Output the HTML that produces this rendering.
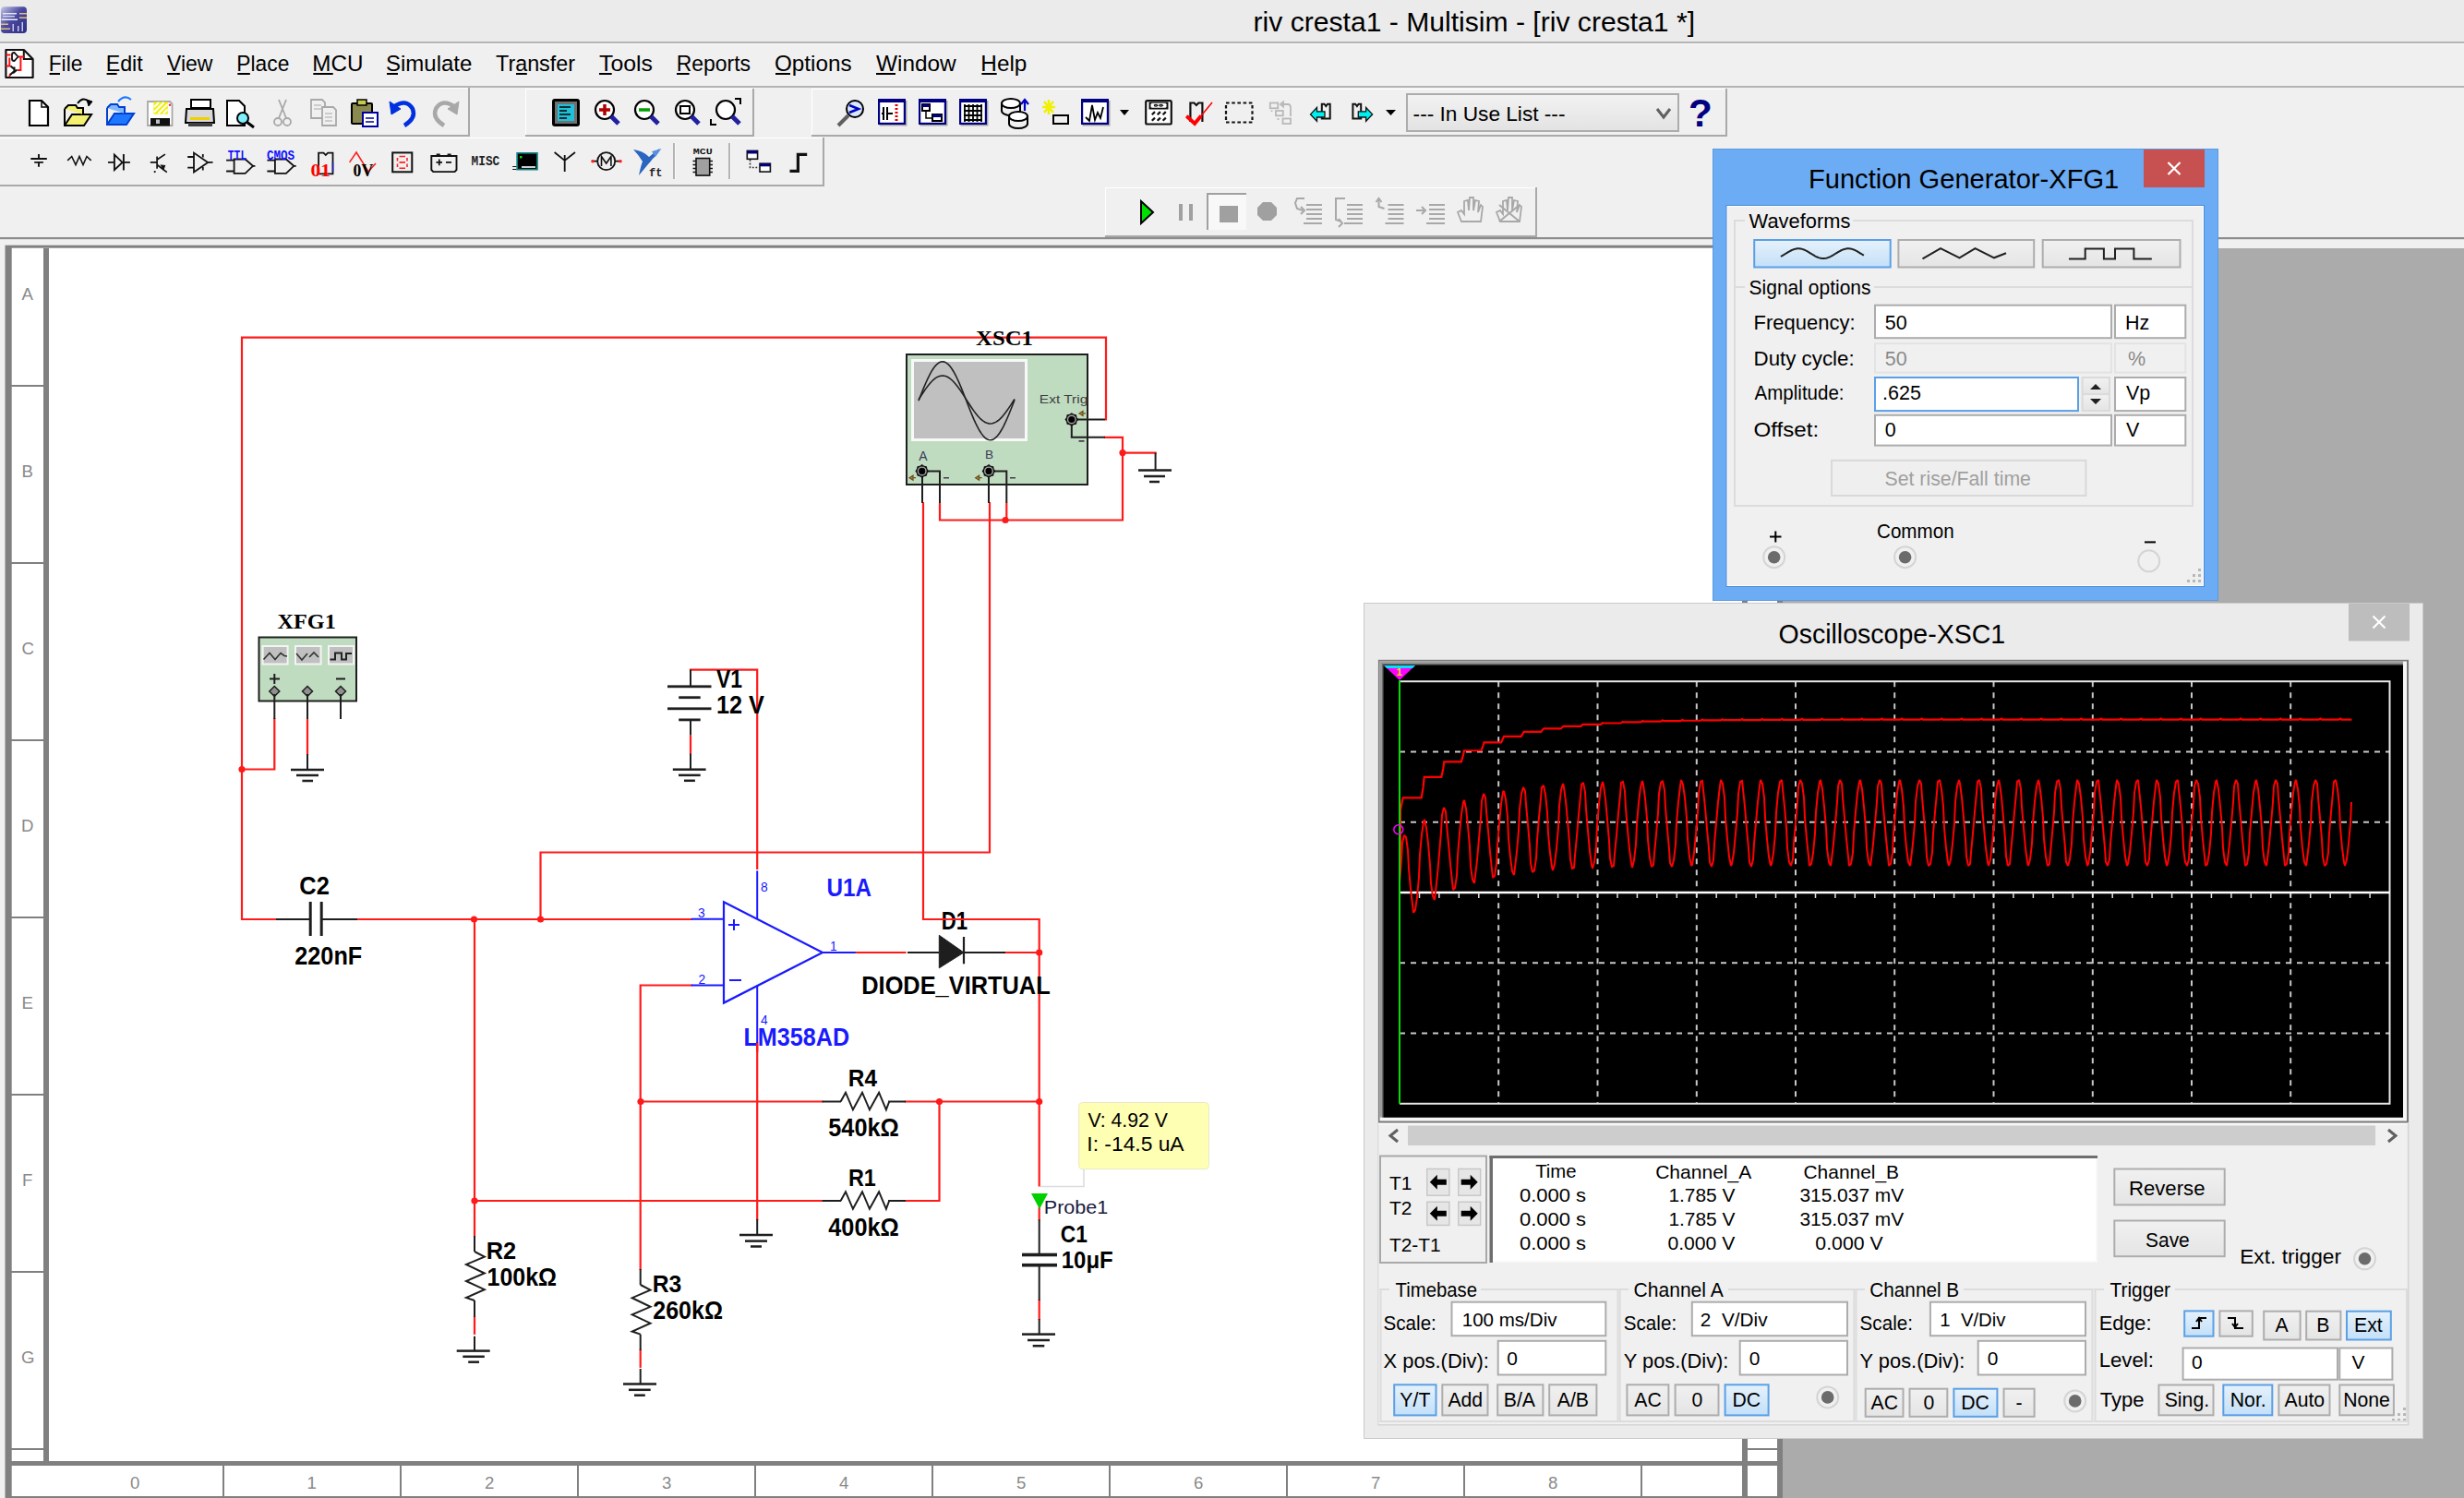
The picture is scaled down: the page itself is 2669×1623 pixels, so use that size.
<!DOCTYPE html>
<html><head><meta charset="utf-8"><title>Multisim</title>
<style>html,body{margin:0;padding:0;background:#f0f0f0;overflow:hidden;}svg{display:block;}text{white-space:pre;}</style>
</head><body>
<svg width="2669" height="1623" viewBox="0 0 2669 1623" font-family="'Liberation Sans', sans-serif">
<defs><linearGradient id="gbtn" x1="0" y1="0" x2="0" y2="1"><stop offset="0" stop-color="#f0f0f0"/><stop offset="1" stop-color="#e5e5e5"/></linearGradient>
<linearGradient id="gsel" x1="0" y1="0" x2="0" y2="1"><stop offset="0" stop-color="#e5f1fb"/><stop offset="1" stop-color="#c4e0f8"/></linearGradient></defs>
<rect x="0" y="0" width="2669" height="1623" fill="#f0f0f0" />
<rect x="0" y="0" width="2669" height="45" fill="#ebebeb" />
<rect x="0" y="45" width="2669" height="2" fill="#b4b4b4" />
<rect x="0" y="47" width="2669" height="1" fill="#fafafa" />
<linearGradient id="gicon" x1="0" y1="0" x2="1" y2="1"><stop offset="0" stop-color="#c8c8e8"/><stop offset="0.45" stop-color="#4a4aa0"/><stop offset="1" stop-color="#2c2c80"/></linearGradient>
<rect x="1" y="7.2" width="28" height="28.8" fill="url(#gicon)" rx="4"/>
<rect x="3" y="14" width="15" height="1.5" fill="#e8e8f8" />
<rect x="3" y="17" width="13" height="1.5" fill="#d0d0f0" />
<rect x="1.5" y="20.5" width="17.5" height="1.5" fill="#f0f0ff" />
<rect x="21" y="14" width="8" height="1.5" fill="#e0c080" />
<rect x="21" y="18.5" width="8" height="1.5" fill="#e0c080" />
<rect x="1" y="25.5" width="8" height="1.5" fill="#e0c080" />
<rect x="1" y="30.5" width="10" height="1.5" fill="#e0c080" />
<rect x="13.5" y="26" width="1.5" height="8" fill="#c8c8f0" />
<rect x="19" y="28" width="1.5" height="6" fill="#c8c8f0" />
<rect x="23.5" y="24" width="1.5" height="10" fill="#c8c8f0" />
<text x="1357.56" y="33.80" font-family="'Liberation Sans'" font-size="29.07" font-weight="normal" fill="#000" textLength="478.49" lengthAdjust="spacingAndGlyphs" >riv cresta1 - Multisim - [riv cresta1 *]</text>
<rect x="0" y="48" width="2669" height="45" fill="#f0f0f0" />
<rect x="0" y="93" width="2669" height="2" fill="#b4b4b4" />
<path d="M6.4,54 L25.8,54 L35.6,64 L35.6,84 L6.4,84 Z" stroke="#111" stroke-width="2.2" fill="#fff" stroke-linejoin="round"/>
<path d="M25.8,54 L25.8,64 L35.6,64" stroke="#111" stroke-width="2" fill="none" />
<path d="M6.5,59.6 L11.5,59.6 M10.3,62.5 L10.3,71.8 M6.5,71.5 L11.5,71.5 M22.4,61.5 L22.4,76 L19,76 M20,61.5 L25.8,61.5" stroke="#ff1010" stroke-width="2" fill="none" />
<path d="M10,83 L11.5,80" stroke="#ff1010" stroke-width="2" fill="none" />
<path d="M13,59 Q13,57 15.5,57 L19.5,61.5 L15.5,66 Q13,66 13,64 Z" stroke="#111" stroke-width="1.8" fill="none" />
<path d="M11.5,71.5 L15.5,75 M15.5,72.5 L15.5,78 L18.5,75.5 M15.5,77 L11,81" stroke="#111" stroke-width="2" fill="none" />
<text x="52.65" y="76.50" font-family="'Liberation Sans'" font-size="24.13" font-weight="normal" fill="#000" textLength="36.73" lengthAdjust="spacingAndGlyphs" >File</text>
<rect x="53.6" y="79" width="11.4" height="2" fill="#000" />
<text x="114.64" y="76.50" font-family="'Liberation Sans'" font-size="24.13" font-weight="normal" fill="#000" textLength="40.07" lengthAdjust="spacingAndGlyphs" >Edit</text>
<rect x="115.6" y="79" width="11" height="2" fill="#000" />
<text x="181.00" y="76.50" font-family="'Liberation Sans'" font-size="24.13" font-weight="normal" fill="#000" textLength="49.44" lengthAdjust="spacingAndGlyphs" >View</text>
<rect x="181" y="79" width="13.8" height="2" fill="#000" />
<text x="256.35" y="76.50" font-family="'Liberation Sans'" font-size="24.13" font-weight="normal" fill="#000" textLength="57.03" lengthAdjust="spacingAndGlyphs" >Place</text>
<rect x="257.3" y="79" width="13.5" height="2" fill="#000" />
<text x="338.30" y="76.50" font-family="'Liberation Sans'" font-size="24.13" font-weight="normal" fill="#000" textLength="55.12" lengthAdjust="spacingAndGlyphs" >MCU</text>
<rect x="339.3" y="79" width="21.4" height="2" fill="#000" />
<text x="418.00" y="76.50" font-family="'Liberation Sans'" font-size="24.13" font-weight="normal" fill="#000" textLength="93.40" lengthAdjust="spacingAndGlyphs" >Simulate</text>
<rect x="419" y="79" width="12" height="2" fill="#000" />
<text x="537.00" y="76.50" font-family="'Liberation Sans'" font-size="24.13" font-weight="normal" fill="#000" textLength="86.03" lengthAdjust="spacingAndGlyphs" >Transfer</text>
<rect x="559" y="79" width="11.8" height="2" fill="#000" />
<text x="649.00" y="76.50" font-family="'Liberation Sans'" font-size="24.13" font-weight="normal" fill="#000" textLength="58.06" lengthAdjust="spacingAndGlyphs" >Tools</text>
<rect x="649" y="79" width="13.7" height="2" fill="#000" />
<text x="732.65" y="76.50" font-family="'Liberation Sans'" font-size="24.13" font-weight="normal" fill="#000" textLength="80.40" lengthAdjust="spacingAndGlyphs" >Reports</text>
<rect x="733" y="79" width="13.6" height="2" fill="#000" />
<text x="838.99" y="76.50" font-family="'Liberation Sans'" font-size="24.13" font-weight="normal" fill="#000" textLength="83.66" lengthAdjust="spacingAndGlyphs" >Options</text>
<rect x="840" y="79" width="16" height="2" fill="#000" />
<text x="949.00" y="76.50" font-family="'Liberation Sans'" font-size="24.13" font-weight="normal" fill="#000" textLength="86.70" lengthAdjust="spacingAndGlyphs" >Window</text>
<rect x="949" y="79" width="21" height="2" fill="#000" />
<text x="1062.39" y="76.50" font-family="'Liberation Sans'" font-size="24.13" font-weight="normal" fill="#000" textLength="50.02" lengthAdjust="spacingAndGlyphs" >Help</text>
<rect x="1063.4" y="79" width="16.3" height="2" fill="#000" />
<rect x="-2" y="95" width="511" height="1" fill="#ffffff" />
<rect x="-2" y="95" width="1" height="53" fill="#ffffff" />
<rect x="-2" y="146" width="511" height="2" fill="#a9a9a9" />
<rect x="507" y="95" width="2" height="53" fill="#a9a9a9" />
<rect x="569" y="96" width="248" height="1" fill="#ffffff" />
<rect x="569" y="96" width="1" height="52" fill="#ffffff" />
<rect x="569" y="146" width="248" height="2" fill="#a9a9a9" />
<rect x="815" y="96" width="2" height="52" fill="#a9a9a9" />
<rect x="879" y="96" width="992" height="1" fill="#ffffff" />
<rect x="879" y="96" width="1" height="52" fill="#ffffff" />
<rect x="879" y="146" width="992" height="2" fill="#a9a9a9" />
<rect x="1869" y="96" width="2" height="52" fill="#a9a9a9" />
<rect x="-2" y="149" width="895" height="1" fill="#ffffff" />
<rect x="-2" y="149" width="1" height="53" fill="#ffffff" />
<rect x="-2" y="200" width="895" height="2" fill="#a9a9a9" />
<rect x="891" y="149" width="2" height="53" fill="#a9a9a9" />
<rect x="1197" y="203" width="468" height="1" fill="#ffffff" />
<rect x="1197" y="203" width="1" height="54" fill="#ffffff" />
<rect x="1197" y="255" width="468" height="2" fill="#a9a9a9" />
<rect x="1663" y="203" width="2" height="54" fill="#a9a9a9" />
<rect x="0" y="257" width="2669" height="2" fill="#8c8c8c" />
<rect x="0" y="259" width="2669" height="1" fill="#dcdcdc" />
<path d="M32,109 L45,109 L52,116 L52,136 L32,136 Z" stroke="#000" stroke-width="2.2" fill="#fff" />
<path d="M45,109 L45,116 L52,116" stroke="#000" stroke-width="1.5" fill="none" />
<path d="M70,118 L70,136 L91,136 L99,124 L78,124 L70,136" stroke="#000" stroke-width="2" fill="#f4f070" />
<path d="M70,118 L74,114 L82,114 L84,117 L90,117 L90,124" stroke="#000" stroke-width="2" fill="#f4f070" />
<path d="M84,112 Q90,104 96,110" stroke="#000" stroke-width="2" fill="none" />
<path d="M94,108 L100,110 L96,115 Z" stroke="#000" stroke-width="1" fill="#000" />
<path d="M116,117 L116,135 L137,135 L145,123 L124,123 L116,135" stroke="#0040d0" stroke-width="2" fill="#1e78ff" />
<path d="M116,117 L120,113 L127,113 L129,116 L135,116 L135,123" stroke="#0040d0" stroke-width="2" fill="#80b8ff" />
<path d="M128,110 Q135,102 142,108" stroke="#1e78ff" stroke-width="2" fill="none" />
<path d="M160,110 L184,110 L186.5,112.5 L186.5,136 L160,136 Z" stroke="#a8a8a8" stroke-width="1.8" fill="#ffffff" />
<rect x="166.4" y="110.4" width="15.4" height="13.2" fill="#f0f000" />
<path d="M167,116 L172,111 M167,121.5 L177.5,111 M171.5,123 L181.5,113 M177,123 L181.5,118.5" stroke="#ffffff" stroke-width="2.2" fill="none" />
<rect x="163" y="128" width="21" height="8.5" fill="#111" />
<rect x="169" y="129.5" width="4" height="4.5" fill="#c0c0c0" />
<circle cx="184" cy="113.7" r="1.2" fill="#ff2020" stroke="none" stroke-width="1"/>
<rect x="207" y="108" width="21" height="9" fill="#fff" stroke="#000" stroke-width="2"/>
<path d="M202,118 L231,118 L232,133 L201,133 Z" stroke="#000" stroke-width="2" fill="#d8d8d8" />
<rect x="206" y="127" width="21" height="3" fill="#f0d000" />
<rect x="204" y="133" width="26" height="4" fill="#404040" />
<path d="M246,109 L259,109 L265,115 L265,136 L246,136 Z" stroke="#000" stroke-width="2" fill="#fff" />
<circle cx="263" cy="128" r="6" fill="#80f0ff" stroke="#000" stroke-width="2"/>
<path d="M267,132 L275,138" stroke="#000" stroke-width="3" fill="none" />
<circle cx="301" cy="132" r="4" fill="none" stroke="#a8a8a8" stroke-width="1.8"/>
<circle cx="311" cy="132" r="4" fill="none" stroke="#a8a8a8" stroke-width="1.8"/>
<path d="M302,128 L310,108 M310,128 L302,108" stroke="#a8a8a8" stroke-width="1.8" fill="none" />
<path d="M337,108 L349,108 L352,111 L352,128 L337,128 Z" stroke="#a8a8a8" stroke-width="1.8" fill="#f0f0f0" />
<path d="M349,116 L361,116 L364,119 L364,136 L349,136 Z" stroke="#a8a8a8" stroke-width="1.8" fill="#f0f0f0" />
<path d="M340,114 L348,114 M340,118 L348,118 M352,123 L360,123 M352,127 L360,127 M352,131 L360,131" stroke="#a8a8a8" stroke-width="1.2" fill="none" />
<rect x="380" y="111" width="24" height="24" fill="#000" rx="2"/>
<rect x="382" y="113" width="20" height="20" fill="#8a8a50" />
<rect x="387" y="108" width="10" height="6" fill="#c8c850" stroke="#000" stroke-width="1.5"/>
<rect x="393" y="122" width="16" height="15" fill="#fff" stroke="#0000a0" stroke-width="2"/>
<path d="M396,128 L405,128 M396,132 L405,132" stroke="#0000a0" stroke-width="1.5" fill="none" />
<path d="M426,116 Q440,106 447,118 Q451,128 438,136" stroke="#0030e0" stroke-width="4.5" fill="none" />
<path d="M422,110 L424,124 L434,118 Z" stroke="#0030e0" stroke-width="1" fill="#0030e0" />
<path d="M493,116 Q479,106 472,118 Q468,128 481,136" stroke="#a8a8a8" stroke-width="4.5" fill="none" />
<path d="M497,110 L495,124 L485,118 Z" stroke="#a8a8a8" stroke-width="1" fill="#a8a8a8" />
<rect x="598" y="107" width="30" height="30" fill="#000" rx="3"/>
<rect x="601" y="110" width="24" height="24" fill="#707070" />
<rect x="604" y="113" width="18" height="18" fill="#20c0d8" />
<path d="M606,116 L618,116 M606,120 L614,120 M606,124 L618,124 M606,128 L614,128" stroke="#000" stroke-width="1.5" fill="none" />
<circle cx="655" cy="119" r="10" fill="#fff" stroke="#000" stroke-width="2.2"/>
<path d="M662,126 L670,134" stroke="#2020a0" stroke-width="5" fill="none" />
<path d="M649,119 L661,119 M655,113 L655,125" stroke="#b00000" stroke-width="3.5" fill="none" />
<circle cx="698" cy="119" r="10" fill="#fff" stroke="#000" stroke-width="2.2"/>
<path d="M705,126 L713,134" stroke="#2020a0" stroke-width="5" fill="none" />
<path d="M692,119 L704,119" stroke="#00a000" stroke-width="3.5" fill="none" />
<circle cx="742" cy="119" r="10" fill="#fff" stroke="#000" stroke-width="2.2"/>
<path d="M749,126 L757,134" stroke="#2020a0" stroke-width="5" fill="none" />
<rect x="737" y="115" width="10" height="8" fill="none" stroke="#000" stroke-width="2"/>
<circle cx="786" cy="119" r="10" fill="#fff" stroke="#000" stroke-width="2.2"/>
<path d="M793,126 L801,134" stroke="#2020a0" stroke-width="5" fill="none" />
<path d="M796,107 L802,107 L802,113" stroke="#000" stroke-width="2" fill="none" />
<path d="M770,129 L770,135 L776,135" stroke="#000" stroke-width="2" fill="none" />
<circle cx="926" cy="118" r="9" fill="#d8e8ff" stroke="#000" stroke-width="2"/>
<path d="M920,114 L930,118 L920,122" stroke="#0000c0" stroke-width="2.5" fill="none" />
<path d="M919,125 L908,136" stroke="#606060" stroke-width="4" fill="none" />
<rect x="952.5" y="109" width="30" height="27.5" fill="#a8a8a8" />
<rect x="951" y="107" width="30" height="28" fill="#000080" />
<rect x="953.2" y="111" width="25.6" height="21.8" fill="#fff" />
<path d="M957,116 L957,130 M961,116 L961,130 M955,123 L957,123 M961,123 L967,123" stroke="#000" stroke-width="2" fill="none" />
<path d="M971,113 L971,132" stroke="#e00000" stroke-width="3" fill="none" stroke-dasharray="2,2"/>
<rect x="996.5" y="109" width="30" height="27.5" fill="#a8a8a8" />
<rect x="995" y="107" width="30" height="28" fill="#000080" />
<rect x="997.2" y="111" width="25.6" height="21.8" fill="#fff" />
<rect x="999" y="113" width="8" height="7" fill="none" stroke="#000" stroke-width="2"/>
<rect x="999" y="113" width="8" height="3" fill="#000080" />
<rect x="1010" y="124" width="10" height="7" fill="none" stroke="#000" stroke-width="2"/>
<rect x="1010" y="124" width="10" height="3" fill="#000080" />
<path d="M1003,120 L1003,128 L1010,128" stroke="#000" stroke-width="1.5" fill="none" />
<rect x="1040.5" y="109" width="30" height="27.5" fill="#a8a8a8" />
<rect x="1039" y="107" width="30" height="28" fill="#000080" />
<rect x="1041.2" y="111" width="25.6" height="21.8" fill="#fff" />
<path d="M1045.0,113 L1045.0,132 M1049.5,113 L1049.5,132 M1054.0,113 L1054.0,132 M1058.5,113 L1058.5,132 M1063.0,113 L1063.0,132 M1044,115 L1064,115 M1044,120 L1064,120 M1044,125 L1064,125 M1044,130 L1064,130" stroke="#000" stroke-width="1.8" fill="none" />
<path d="M1085,112 L1085,120 A10,5 0 0 0 1105,120 L1105,112" stroke="#000" stroke-width="2" fill="#f0f0f0" />
<ellipse cx="1095" cy="112" rx="10" ry="5" fill="#fff" stroke="#000" stroke-width="2"/>
<path d="M1093,126 L1093,134 A10,5 0 0 0 1113,134 L1113,126" stroke="#000" stroke-width="2" fill="#f0f0f0" />
<ellipse cx="1103" cy="126" rx="10" ry="5" fill="#fff" stroke="#000" stroke-width="2"/>
<path d="M1110,120 L1110,110 M1106,113 L1110,108 L1114,113" stroke="#0000c0" stroke-width="2.2" fill="none" />
<path d="M1131,110 L1141,122 M1141,110 L1131,122 M1136,108 L1136,124 M1129,116 L1143,116" stroke="#f0f000" stroke-width="2.5" fill="none" />
<rect x="1141" y="125" width="16" height="9" fill="none" stroke="#000" stroke-width="2"/>
<rect x="1172.5" y="109" width="30" height="27.5" fill="#a8a8a8" />
<rect x="1171" y="107" width="30" height="28" fill="#000080" />
<rect x="1173.2" y="111" width="25.6" height="21.8" fill="#fff" />
<path d="M1176,127 L1180,131 L1183,114 L1186,130 L1189,122 L1192,128 L1195,116" stroke="#000" stroke-width="1.8" fill="none" />
<path d="M1213,119 L1223,119 L1218,125 Z" stroke="none" stroke-width="0" fill="#000" />
<rect x="1241.2" y="109.2" width="27.6" height="25.3" fill="#fff" stroke="#111" stroke-width="2.2" rx="1.5"/>
<rect x="1244.5" y="110.5" width="21" height="8" fill="#111" />
<rect x="1246.5" y="111.8" width="17" height="5" fill="#fff" rx="1.5"/>
<path d="M1250,114.3 Q1252,112.5 1254,114.3 Q1252,116 1250,114.3 M1255.5,114.3 Q1257.5,112.5 1259.5,114.3 Q1257.5,116 1255.5,114.3" stroke="#111" stroke-width="1.2" fill="none" />
<path d="M1247.8000000000002,124.3 L1251.0,121.10000000000001" stroke="#111" stroke-width="2.2" fill="none" />
<path d="M1253.7,124.3 L1256.8999999999999,121.10000000000001" stroke="#111" stroke-width="2.2" fill="none" />
<path d="M1259.6000000000001,124.3 L1262.8,121.10000000000001" stroke="#111" stroke-width="2.2" fill="none" />
<path d="M1247.8000000000002,130.79999999999998 L1251.0,127.6" stroke="#111" stroke-width="2.2" fill="none" />
<path d="M1253.7,130.79999999999998 L1256.8999999999999,127.6" stroke="#111" stroke-width="2.2" fill="none" />
<path d="M1259.6000000000001,130.79999999999998 L1262.8,127.6" stroke="#111" stroke-width="2.2" fill="none" />
<path d="M1289.4,132.1 L1289.4,111.5 L1293.5,111.5 L1295.9,114 L1298.3,111.5 L1302.4,111.5 L1302.4,132.1" stroke="#111" stroke-width="2.2" fill="none" />
<path d="M1285.3,125.7 L1294.1,133.9 L1313,111" stroke="#ff0000" stroke-width="1.6" fill="none" />
<path d="M1285.3,125.7 L1294.1,133.9 L1301,125.5" stroke="#ff0000" stroke-width="4" fill="none" />
<rect x="1328" y="111.5" width="28.5" height="21" fill="none" stroke="#111" stroke-width="2.2" stroke-dasharray="3.6,2.6"/>
<rect x="1375.8" y="111.5" width="8.5" height="5.8" fill="none" stroke="#b8b8b8" stroke-width="1.8"/>
<rect x="1382" y="120" width="7.8" height="5.3" fill="none" stroke="#b8b8b8" stroke-width="1.8"/>
<rect x="1389.5" y="128.5" width="8.5" height="5.5" fill="none" stroke="#b8b8b8" stroke-width="1.8"/>
<path d="M1377.5,119.5 L1377.5,121 M1384.5,128 L1384.5,130" stroke="#b8b8b8" stroke-width="1.8" fill="none" />
<path d="M1390,113 L1395,113 Q1398,113 1398,117 L1398,126 M1387,113 L1390,110.5 L1390,115.5 Z" stroke="#b8b8b8" stroke-width="1.8" fill="none" />
<path d="M1431.8,128.6 L1431.8,112.7 L1434.5,112.7 L1436.3,115 L1438,112.7 L1440.7,112.7 L1440.7,128.6 Z" stroke="#111" stroke-width="2" fill="none" />
<path d="M1419.5,123.9 L1426.5,116.5 L1426.5,120.8 L1435,120.8 L1435,127 L1426.5,127 L1426.5,131.3 Z" stroke="#111" stroke-width="1.3" fill="#00f0f0" />
<path d="M1465.4,128.6 L1465.4,112.7 L1468.1,112.7 L1469.9,115 L1471.6,112.7 L1474.2,112.7 L1474.2,128.6 Z" stroke="#111" stroke-width="2" fill="none" />
<path d="M1486.6,123.9 L1479.6,116.5 L1479.6,120.8 L1471.3,120.8 L1471.3,127 L1479.6,127 L1479.6,131.3 Z" stroke="#111" stroke-width="1.3" fill="#00f0f0" />
<path d="M1501,119 L1512,119 L1506.5,125 Z" stroke="none" stroke-width="0" fill="#000" />
<linearGradient id="gcombo" x1="0" y1="0" x2="0" y2="1"><stop offset="0" stop-color="#f2f2f2"/><stop offset="1" stop-color="#e3e3e3"/></linearGradient>
<rect x="1523" y="101" width="296" height="42" fill="#acacac" />
<rect x="1525" y="103" width="292" height="38" fill="url(#gcombo)" />
<text x="1530.61" y="130.90" font-family="'Liberation Sans'" font-size="22.97" font-weight="normal" fill="#000" textLength="164.82" lengthAdjust="spacingAndGlyphs" >--- In Use List ---</text>
<path d="M1795,118 L1802,127 L1809,118" stroke="#606060" stroke-width="3" fill="none" />
<text x="1829.00" y="137.00" font-family="'Liberation Sans'" font-size="42.15" font-weight="bold" fill="#000080" >?</text>
<path d="M33.3,172 L50.8,172 M37.2,175.9 L46.9,175.9 M42,167 L42,172 M42,176 L42,180.7" stroke="#111" stroke-width="1.9" fill="none" />
<path d="M73.2,173.9 L77.7,169.5 L82,178.6 L86,169.5 L90,178.6 L94,169.5 L98.7,173.9" stroke="#111" stroke-width="1.6" fill="none" />
<path d="M117,175.9 L123.9,175.9 M133.9,175.9 L140.9,175.9 M133.9,167 L133.9,184.5" stroke="#111" stroke-width="1.9" fill="none" />
<path d="M123.9,167.6 L132.6,175.9 L123.9,184.1 Z" stroke="#111" stroke-width="1.9" fill="none" />
<path d="M162.8,175.9 L170.1,175.9 M170.1,169.5 L170.1,182.7 M170.1,173 L178.9,167.1 M170.1,178.5 L180.8,186.6" stroke="#111" stroke-width="1.7" fill="none" />
<path d="M174.5,179 L178.5,179.5 L177,183.5 Z" stroke="#111" stroke-width="1.2" fill="#111" />
<circle cx="167.7" cy="186.1" r="1.1" fill="#111" stroke="none" stroke-width="1"/>
<path d="M210,165.6 L210,186.6 L225.2,175.9 Z" stroke="#111" stroke-width="1.8" fill="none" />
<path d="M203.2,170 L210,170 M203.2,181.7 L210,181.7 M225.2,175.9 L230.5,175.9 M219.8,167 L219.8,170.5 M219.8,181 L219.8,184.6" stroke="#111" stroke-width="1.8" fill="none" />
<path d="M253.6,172.5 L265.6,172.5 L274,179.8 L265.6,187.8 L253.6,187.8 Z" stroke="#111" stroke-width="1.8" fill="none" />
<path d="M245.1,173.6 L253.6,173.6 M245.1,185.5 L253.6,185.5 M274,179.8 L276.4,179.8" stroke="#111" stroke-width="1.8" fill="none" />
<text x="246.80" y="172.50" font-family="'Liberation Mono'" font-size="14.39" font-weight="bold" fill="#1010ff" textLength="20.39" lengthAdjust="spacingAndGlyphs" >TTL</text>
<path d="M297.9,172.5 L309.90000000000003,172.5 L318.3,179.8 L309.90000000000003,187.8 L297.9,187.8 Z" stroke="#111" stroke-width="1.8" fill="none" />
<path d="M289.4,173.6 L297.9,173.6 M289.4,185.5 L297.9,185.5 M318.3,179.8 L320.7,179.8" stroke="#111" stroke-width="1.8" fill="none" />
<text x="288.90" y="172.50" font-family="'Liberation Mono'" font-size="14.39" font-weight="bold" fill="#1010ff" textLength="30.27" lengthAdjust="spacingAndGlyphs" >CMOS</text>
<path d="M345.1,165.6 L350.5,165.6 L352.8,168 L355.2,165.6 L360.5,165.6 L360.5,188.4 L345.1,188.4 Z" stroke="#111" stroke-width="1.8" fill="none" />
<rect x="359.75" y="176" width="1.5" height="10" fill="#2020c0" />
<text x="336.60" y="190.60" font-family="'Liberation Serif'" font-size="19.85" font-weight="bold" fill="#ff0000" textLength="21.39" lengthAdjust="spacingAndGlyphs" >01</text>
<path d="M378.6,175.9 L386,165 L399,186 L407,177" stroke="#ff2020" stroke-width="1.6" fill="none" />
<text x="382.60" y="190.60" font-family="'Liberation Serif'" font-size="19.85" font-weight="bold" fill="#000" textLength="21.59" lengthAdjust="spacingAndGlyphs" >0V</text>
<rect x="425.2" y="165.4" width="21.1" height="20.9" fill="none" stroke="#111" stroke-width="2"/>
<path d="M432.5,169.5 L439,169.5 M432.5,175.9 L439,175.9 M432.5,182.2 L439,182.2 M430.5,171 L430.5,174.5 M441,171 L441,174.5 M430.5,177.5 L430.5,181 M441,177.5 L441,181" stroke="#ff2020" stroke-width="1.6" fill="none" />
<path d="M467.3,169 L494.5,169 L494.5,184 L492.5,186.1 L469.3,186.1 L467.3,184 Z" stroke="#111" stroke-width="1.9" fill="none" />
<rect x="472.7" y="166.5" width="4" height="2.5" fill="#111" />
<rect x="484.6" y="166.5" width="4" height="2.5" fill="#111" />
<path d="M472.5,175.9 L479,175.9 M475.8,172.6 L475.8,179.2 M483,175.9 L489,175.9" stroke="#111" stroke-width="1.7" fill="none" />
<text x="510.60" y="178.80" font-family="'Liberation Mono'" font-size="14.85" font-weight="bold" fill="#222" textLength="30.71" lengthAdjust="spacingAndGlyphs" >MISC</text>
<rect x="559.3" y="165" width="23.5" height="19.5" fill="#108080" />
<rect x="561" y="166.7" width="20.1" height="16.1" fill="#000" />
<rect x="563" y="169" width="2.5" height="2.5" fill="#00e000" />
<rect x="565" y="180" width="15" height="2" fill="#d0d0d0" />
<path d="M555.2,180.5 L559.3,180.5 M555.2,183.5 L559.3,183.5" stroke="#111" stroke-width="1.2" fill="none" />
<path d="M600.6,165 L611.7,173.9 L623,165 M611.7,168 L611.7,186" stroke="#111" stroke-width="1.8" fill="none" />
<circle cx="656.7" cy="174.7" r="9.5" fill="none" stroke="#111" stroke-width="1.8"/>
<path d="M651.5,180 L651.5,169.5 L656.7,177 L661.9,169.5 L661.9,180" stroke="#111" stroke-width="1.6" fill="none" />
<path d="M641.2,174.7 L647.2,174.7 M666.2,174.7 L672.9,174.7" stroke="#111" stroke-width="1.8" fill="none" />
<circle cx="642" cy="174.7" r="1.8" fill="#ff2020" stroke="none" stroke-width="1"/>
<circle cx="672" cy="174.7" r="1.8" fill="#ff2020" stroke="none" stroke-width="1"/>
<path d="M686,162 Q696,163 703,170 L714,161 Q712,168 707,172 Q704,176 702,178 Q697,184 692,190 Q694,180 696,175 Q692,168 686,162 Z" stroke="none" stroke-width="0" fill="#2a66c0" />
<path d="M706,164 L716.5,161 L710,170 Z" stroke="none" stroke-width="0" fill="#5a90e0" />
<text x="703.00" y="191.00" font-family="'Liberation Mono'" font-size="12.88" font-weight="bold" fill="#202020" textLength="14.37" lengthAdjust="spacingAndGlyphs" >ft</text>
<rect x="729" y="155" width="2" height="39" fill="#b4b4b4" />
<rect x="731" y="155" width="1" height="39" fill="#fafafa" />
<text x="750.80" y="167.00" font-family="'Liberation Mono'" font-size="9.09" font-weight="bold" fill="#111" textLength="20.87" lengthAdjust="spacingAndGlyphs" >MCU</text>
<rect x="754" y="171.5" width="14.7" height="18.6" fill="#a0a0a0" stroke="#111" stroke-width="1.6"/>
<path d="M750.5,174.5 L754,174.5 M750.5,178.5 L754,178.5 M750.5,182.5 L754,182.5 M750.5,186.5 L754,186.5 M768.7,174.5 L772,174.5 M768.7,178.5 L772,178.5 M768.7,182.5 L772,182.5 M768.7,186.5 L772,186.5" stroke="#111" stroke-width="1.6" fill="none" />
<rect x="789" y="155" width="2" height="39" fill="#b4b4b4" />
<rect x="791" y="155" width="1" height="39" fill="#fafafa" />
<rect x="809.3" y="163.4" width="11.3" height="8.9" fill="#fff" stroke="#111" stroke-width="1.6"/>
<rect x="809.3" y="163.4" width="11.3" height="3.1" fill="#000080" />
<rect x="823" y="177.2" width="11.4" height="8.9" fill="#fff" stroke="#111" stroke-width="1.6"/>
<rect x="823" y="177.2" width="11.4" height="3.1" fill="#000080" />
<path d="M812.5,173 L812.5,181.5 L823,181.5" stroke="#333" stroke-width="1.6" fill="none" stroke-dasharray="1.8,1.8"/>
<path d="M855.5,185.3 L864.4,185.3 L864.4,167.4 L874.2,167.4" stroke="#111" stroke-width="3.2" fill="none" />
<path d="M1236,218 L1249,230 L1236,242 Z" stroke="#000" stroke-width="2" fill="#00e000" />
<rect x="1277" y="221" width="4" height="18" fill="#a0a0a0" />
<rect x="1288" y="221" width="4" height="18" fill="#a0a0a0" />
<rect x="1307" y="209" width="43" height="40" fill="#f8f8f8" />
<rect x="1307" y="209" width="43" height="2" fill="#a0a0a0" />
<rect x="1307" y="209" width="2" height="40" fill="#a0a0a0" />
<rect x="1321" y="223" width="20" height="18" fill="#a0a0a0" />
<path d="M1368,219 L1377,219 L1383,225 L1383,233 L1377,239 L1368,239 L1362,233 L1362,225 Z" stroke="none" stroke-width="0" fill="#a0a0a0" />
<path d="M1415,222 L1432,222 M1415,227 L1432,227 M1415,232 L1432,232 M1415,237 L1432,237 M1412,242 L1432,242" stroke="#a8a8a8" stroke-width="1.8" fill="none" />
<path d="M1413,215 L1405,215 L1403,220 L1405,226 L1411,228" stroke="#a8a8a8" stroke-width="2" fill="none" />
<path d="M1409,224 L1413,228 L1409,232" stroke="#a8a8a8" stroke-width="2" fill="none" />
<path d="M1459,222 L1476,222 M1459,227 L1476,227 M1459,232 L1476,232 M1459,237 L1476,237 M1456,242 L1476,242" stroke="#a8a8a8" stroke-width="1.8" fill="none" />
<path d="M1457,215 L1447,215 L1447,238 L1453,240" stroke="#a8a8a8" stroke-width="2" fill="none" />
<path d="M1450,237 L1454,242 L1450,246" stroke="#a8a8a8" stroke-width="2" fill="none" />
<path d="M1503.5,222 L1520.5,222 M1503.5,227 L1520.5,227 M1503.5,232 L1520.5,232 M1503.5,237 L1520.5,237 M1500.5,242 L1520.5,242" stroke="#a8a8a8" stroke-width="1.8" fill="none" />
<path d="M1493.5,216 L1493.5,224 L1499.5,226" stroke="#a8a8a8" stroke-width="2" fill="none" />
<path d="M1490.5,219 L1493.5,215 L1496.5,219" stroke="#a8a8a8" stroke-width="2" fill="none" />
<path d="M1548,222 L1565,222 M1548,227 L1565,227 M1548,232 L1565,232 M1548,237 L1565,237 M1545,242 L1565,242" stroke="#a8a8a8" stroke-width="1.8" fill="none" />
<path d="M1534,228 L1544,228 M1540,224 L1544,228 L1540,232" stroke="#a8a8a8" stroke-width="2" fill="none" />
<path d="M1583,240 L1579,230 L1583,228 L1586,232 L1586,218 L1590,217 L1591,228 L1592,214 L1596,214 L1596,228 L1598,217 L1602,218 L1601,230 L1604,222 L1606,224 L1604,240 Z" stroke="#a8a8a8" stroke-width="1.8" fill="none" />
<path d="M1625,240 L1621,230 L1625,228 L1628,232 L1628,218 L1632,217 L1633,228 L1634,214 L1638,214 L1638,228 L1640,217 L1644,218 L1643,230 L1646,222 L1648,224 L1646,240 Z" stroke="#a8a8a8" stroke-width="1.8" fill="none" />
<path d="M1624,222 L1646,240 M1646,222 L1624,240" stroke="#a8a8a8" stroke-width="2" fill="none" />
<rect x="1931" y="269" width="738" height="1354" fill="#ababab" />
<rect x="5.5" y="265.7" width="1925.5" height="1357.3" fill="#808080" />
<rect x="12.7" y="268.7" width="1912.3" height="1352.3" fill="#ffffff" />
<rect x="47" y="269" width="6" height="1319" fill="#808080" />
<rect x="1887" y="269" width="6" height="1352" fill="#808080" />
<rect x="12" y="1583" width="1913" height="5" fill="#808080" />
<rect x="12" y="417" width="35" height="2" fill="#808080" />
<rect x="1893" y="417" width="32" height="2" fill="#808080" />
<rect x="12" y="609" width="35" height="2" fill="#808080" />
<rect x="1893" y="609" width="32" height="2" fill="#808080" />
<rect x="12" y="801" width="35" height="2" fill="#808080" />
<rect x="1893" y="801" width="32" height="2" fill="#808080" />
<rect x="12" y="993" width="35" height="2" fill="#808080" />
<rect x="1893" y="993" width="32" height="2" fill="#808080" />
<rect x="12" y="1185" width="35" height="2" fill="#808080" />
<rect x="1893" y="1185" width="32" height="2" fill="#808080" />
<rect x="12" y="1377" width="35" height="2" fill="#808080" />
<rect x="1893" y="1377" width="32" height="2" fill="#808080" />
<rect x="12" y="1569" width="35" height="2" fill="#808080" />
<rect x="1893" y="1569" width="32" height="2" fill="#808080" />
<rect x="241" y="1588" width="2" height="33" fill="#808080" />
<rect x="433" y="1588" width="2" height="33" fill="#808080" />
<rect x="625" y="1588" width="2" height="33" fill="#808080" />
<rect x="817" y="1588" width="2" height="33" fill="#808080" />
<rect x="1009" y="1588" width="2" height="33" fill="#808080" />
<rect x="1201" y="1588" width="2" height="33" fill="#808080" />
<rect x="1393" y="1588" width="2" height="33" fill="#808080" />
<rect x="1585" y="1588" width="2" height="33" fill="#808080" />
<rect x="1777" y="1588" width="2" height="33" fill="#808080" />
<text x="23.50" y="324.50" font-family="'Liberation Sans'" font-size="18.60" font-weight="normal" fill="#8a8a8a" >A</text>
<text x="23.50" y="516.50" font-family="'Liberation Sans'" font-size="18.60" font-weight="normal" fill="#8a8a8a" >B</text>
<text x="23.50" y="708.50" font-family="'Liberation Sans'" font-size="18.60" font-weight="normal" fill="#8a8a8a" >C</text>
<text x="23.00" y="900.50" font-family="'Liberation Sans'" font-size="18.60" font-weight="normal" fill="#8a8a8a" >D</text>
<text x="23.50" y="1092.50" font-family="'Liberation Sans'" font-size="18.60" font-weight="normal" fill="#8a8a8a" >E</text>
<text x="24.00" y="1284.50" font-family="'Liberation Sans'" font-size="18.60" font-weight="normal" fill="#8a8a8a" >F</text>
<text x="23.00" y="1476.50" font-family="'Liberation Sans'" font-size="18.60" font-weight="normal" fill="#8a8a8a" >G</text>
<text x="141.00" y="1612.70" font-family="'Liberation Sans'" font-size="18.60" font-weight="normal" fill="#8a8a8a" >0</text>
<text x="332.50" y="1612.70" font-family="'Liberation Sans'" font-size="18.60" font-weight="normal" fill="#8a8a8a" >1</text>
<text x="525.00" y="1612.70" font-family="'Liberation Sans'" font-size="18.60" font-weight="normal" fill="#8a8a8a" >2</text>
<text x="717.00" y="1612.70" font-family="'Liberation Sans'" font-size="18.60" font-weight="normal" fill="#8a8a8a" >3</text>
<text x="909.00" y="1612.70" font-family="'Liberation Sans'" font-size="18.60" font-weight="normal" fill="#8a8a8a" >4</text>
<text x="1101.00" y="1612.70" font-family="'Liberation Sans'" font-size="18.60" font-weight="normal" fill="#8a8a8a" >5</text>
<text x="1293.00" y="1612.70" font-family="'Liberation Sans'" font-size="18.60" font-weight="normal" fill="#8a8a8a" >6</text>
<text x="1485.00" y="1612.70" font-family="'Liberation Sans'" font-size="18.60" font-weight="normal" fill="#8a8a8a" >7</text>
<text x="1677.00" y="1612.70" font-family="'Liberation Sans'" font-size="18.60" font-weight="normal" fill="#8a8a8a" >8</text>
<path d="M1198,454.5 L1198,365.6 L262,365.6 L262,996 L299,996" stroke="#ff1a1a" stroke-width="2.2" fill="none" stroke-linejoin="miter" stroke-linecap="square"/>
<path d="M387,996 L748.8,996" stroke="#ff1a1a" stroke-width="2.2" fill="none" stroke-linejoin="miter" stroke-linecap="square"/>
<path d="M297.3,779 L297.3,833.5 L262,833.5" stroke="#ff1a1a" stroke-width="2.2" fill="none" stroke-linejoin="miter" stroke-linecap="square"/>
<path d="M333,780 L333,817" stroke="#ff1a1a" stroke-width="2.2" fill="none" stroke-linejoin="miter" stroke-linecap="square"/>
<path d="M1072,545 L1072,923.5 L585.5,923.5 L585.5,996" stroke="#ff1a1a" stroke-width="2.2" fill="none" stroke-linejoin="miter" stroke-linecap="square"/>
<path d="M1000,545 L1000,996 L1125.7,996 L1125.7,1284.5" stroke="#ff1a1a" stroke-width="2.2" fill="none" stroke-linejoin="miter" stroke-linecap="square"/>
<path d="M926.7,1032 L980.5,1032" stroke="#ff1a1a" stroke-width="2.2" fill="none" stroke-linejoin="miter" stroke-linecap="square"/>
<path d="M1089,1032 L1125.7,1032" stroke="#ff1a1a" stroke-width="2.2" fill="none" stroke-linejoin="miter" stroke-linecap="square"/>
<path d="M748,725.6 L820.2,725.6 L820.2,941" stroke="#ff1a1a" stroke-width="2.2" fill="none" stroke-linejoin="miter" stroke-linecap="square"/>
<path d="M748,797.5 L748,816.4" stroke="#ff1a1a" stroke-width="2.2" fill="none" stroke-linejoin="miter" stroke-linecap="square"/>
<path d="M820.2,1130 L820.2,1321" stroke="#ff1a1a" stroke-width="2.2" fill="none" stroke-linejoin="miter" stroke-linecap="square"/>
<path d="M748.8,1067.5 L693.7,1067.5 L693.7,1375" stroke="#ff1a1a" stroke-width="2.2" fill="none" stroke-linejoin="miter" stroke-linecap="square"/>
<path d="M694,1193.5 L890.6,1193.5" stroke="#ff1a1a" stroke-width="2.2" fill="none" stroke-linejoin="miter" stroke-linecap="square"/>
<path d="M981,1193.5 L1125.7,1193.5" stroke="#ff1a1a" stroke-width="2.2" fill="none" stroke-linejoin="miter" stroke-linecap="square"/>
<path d="M514,1301 L890.6,1301" stroke="#ff1a1a" stroke-width="2.2" fill="none" stroke-linejoin="miter" stroke-linecap="square"/>
<path d="M981,1301 L1017.5,1301 L1017.5,1193.5" stroke="#ff1a1a" stroke-width="2.2" fill="none" stroke-linejoin="miter" stroke-linecap="square"/>
<path d="M514,996 L514,1339" stroke="#ff1a1a" stroke-width="2.2" fill="none" stroke-linejoin="miter" stroke-linecap="square"/>
<path d="M514,1427 L514,1444.8" stroke="#ff1a1a" stroke-width="2.2" fill="none" stroke-linejoin="miter" stroke-linecap="square"/>
<path d="M693.7,1463 L693.7,1480.8" stroke="#ff1a1a" stroke-width="2.2" fill="none" stroke-linejoin="miter" stroke-linecap="square"/>
<path d="M1197,473.8 L1216,473.8 L1216,563.5 L1018,563.5 L1018,546" stroke="#ff1a1a" stroke-width="2.2" fill="none" stroke-linejoin="miter" stroke-linecap="square"/>
<path d="M1216,490.6 L1251.6,490.6" stroke="#ff1a1a" stroke-width="2.2" fill="none" stroke-linejoin="miter" stroke-linecap="square"/>
<path d="M1090.3,546 L1090.3,563.5" stroke="#ff1a1a" stroke-width="2.2" fill="none" stroke-linejoin="miter" stroke-linecap="square"/>
<path d="M1125.7,1309 L1125.7,1321.3" stroke="#ff1a1a" stroke-width="2.2" fill="none" stroke-linejoin="miter" stroke-linecap="square"/>
<path d="M1125.7,1409 L1125.7,1428.8" stroke="#ff1a1a" stroke-width="2.2" fill="none" stroke-linejoin="miter" stroke-linecap="square"/>
<circle cx="262" cy="833.5" r="3.6" fill="#ff1a1a" stroke="none" stroke-width="1"/>
<circle cx="513.5" cy="996" r="3.6" fill="#ff1a1a" stroke="none" stroke-width="1"/>
<circle cx="585.5" cy="996" r="3.6" fill="#ff1a1a" stroke="none" stroke-width="1"/>
<circle cx="1216" cy="490.6" r="3.6" fill="#ff1a1a" stroke="none" stroke-width="1"/>
<circle cx="1089" cy="563.5" r="3.6" fill="#ff1a1a" stroke="none" stroke-width="1"/>
<circle cx="694" cy="1193.5" r="3.6" fill="#ff1a1a" stroke="none" stroke-width="1"/>
<circle cx="1017.5" cy="1193.5" r="3.6" fill="#ff1a1a" stroke="none" stroke-width="1"/>
<circle cx="1125.7" cy="1193.5" r="3.6" fill="#ff1a1a" stroke="none" stroke-width="1"/>
<circle cx="1125.7" cy="1032" r="3.6" fill="#ff1a1a" stroke="none" stroke-width="1"/>
<circle cx="514" cy="1301" r="3.6" fill="#ff1a1a" stroke="none" stroke-width="1"/>
<rect x="981" y="383" width="198" height="143" fill="#1e1e1e" />
<rect x="983" y="385" width="194" height="139" fill="#c0dcc0" />
<rect x="987" y="389" width="126" height="89" fill="#f8f8f8" />
<rect x="990" y="392" width="120" height="83" fill="#c0c0c0" />
<path d="M995,434.3 L997,429.158 L999,424.091 L1001,419.174 L1003,414.479 L1005,410.076 L1007,406.028 L1009,402.396 L1011,399.233 L1013,396.586 L1015,394.492 L1017,392.983 L1019,392.082 L1021,391.801 L1023,392.144 L1025,393.107 L1027,394.675 L1029,396.826 L1031,399.527 L1033,402.739 L1035,406.415 L1037,410.501 L1039,414.937 L1041,419.657 L1043,424.592 L1045,429.67 L1047,434.815 L1049,439.954 L1051,445.009 L1053,449.907 L1055,454.575 L1057,458.946 L1059,462.954 L1061,466.542 L1063,469.655 L1065,472.249 L1067,474.286 L1069,475.734 L1071,476.574 L1073,476.793 L1075,476.387 L1077,475.363 L1079,473.735 L1081,471.528 L1083,468.774 L1085,465.513 L1087,461.794 L1089,457.67 L1091,453.203 L1093,448.458 L1095,443.506 L1097,438.418 L1099,433.269" stroke="#222" stroke-width="1.6" fill="none" />
<path d="M995,433 L997,429.854 L999,426.754 L1001,423.746 L1003,420.874 L1005,418.18 L1007,415.704 L1009,413.483 L1011,411.547 L1013,409.928 L1015,408.647 L1017,407.724 L1019,407.172 L1021,407 L1023,407.211 L1025,407.8 L1027,408.759 L1029,410.075 L1031,411.727 L1033,413.692 L1035,415.941 L1037,418.441 L1039,421.154 L1041,424.042 L1043,427.061 L1045,430.167 L1047,433.315 L1049,436.459 L1051,439.551 L1053,442.548 L1055,445.404 L1057,448.078 L1059,450.53 L1061,452.724 L1063,454.629 L1065,456.216 L1067,457.462 L1069,458.348 L1071,458.862 L1073,458.996 L1075,458.747 L1077,458.121 L1079,457.125 L1081,455.775 L1083,454.09 L1085,452.095 L1087,449.82 L1089,447.297 L1091,444.564 L1093,441.662 L1095,438.632 L1097,435.519 L1099,432.369" stroke="#222" stroke-width="1.6" fill="none" />
<text x="1057.00" y="374.40" font-family="'Liberation Serif'" font-size="22.60" font-weight="bold" fill="#000" textLength="61.92" lengthAdjust="spacingAndGlyphs" >XSC1</text>
<text x="1125.82" y="437.00" font-family="'Liberation Sans'" font-size="13.08" font-weight="normal" fill="#404040" textLength="52.50" lengthAdjust="spacingAndGlyphs" >Ext Trig</text>
<text x="995.30" y="498.60" font-family="'Liberation Sans'" font-size="13.95" font-weight="normal" fill="#3a3a5a" >A</text>
<text x="1067.00" y="496.60" font-family="'Liberation Sans'" font-size="13.66" font-weight="normal" fill="#3a3a5a" >B</text>
<path d="M999,510.6 L999,545" stroke="#1e1e1e" stroke-width="2" fill="none" />
<path d="M999,510.6 L1018,510.6 L1018,545" stroke="#1e1e1e" stroke-width="2" fill="none" />
<path d="M1071,510.6 L1071,545" stroke="#1e1e1e" stroke-width="2" fill="none" />
<path d="M1071,510.6 L1090.3,510.6 L1090.3,545" stroke="#1e1e1e" stroke-width="2" fill="none" />
<path d="M1160.8,454.5 L1197,454.5" stroke="#1e1e1e" stroke-width="2" fill="none" />
<path d="M1160.8,454.5 L1160.8,473.8 L1197,473.8" stroke="#1e1e1e" stroke-width="2" fill="none" />
<polygon points="1006.00,510.40 1004.43,512.77 1003.86,515.56 1001.07,516.13 998.70,517.70 996.33,516.13 993.54,515.56 992.97,512.77 991.40,510.40 992.97,508.03 993.54,505.24 996.33,504.67 998.70,503.10 1001.07,504.67 1003.86,505.24 1004.43,508.03" fill="#111"/>
<circle cx="998.7" cy="510.4" r="4.3" fill="none" stroke="#a0a0a0" stroke-width="1.4"/>
<circle cx="998.7" cy="510.4" r="3" fill="#000" stroke="none" stroke-width="1"/>
<polygon points="1078.30,510.40 1076.73,512.77 1076.16,515.56 1073.37,516.13 1071.00,517.70 1068.63,516.13 1065.84,515.56 1065.27,512.77 1063.70,510.40 1065.27,508.03 1065.84,505.24 1068.63,504.67 1071.00,503.10 1073.37,504.67 1076.16,505.24 1076.73,508.03" fill="#111"/>
<circle cx="1071" cy="510.4" r="4.3" fill="none" stroke="#a0a0a0" stroke-width="1.4"/>
<circle cx="1071" cy="510.4" r="3" fill="#000" stroke="none" stroke-width="1"/>
<polygon points="1168.10,454.50 1166.53,456.87 1165.96,459.66 1163.17,460.23 1160.80,461.80 1158.43,460.23 1155.64,459.66 1155.07,456.87 1153.50,454.50 1155.07,452.13 1155.64,449.34 1158.43,448.77 1160.80,447.20 1163.17,448.77 1165.96,449.34 1166.53,452.13" fill="#111"/>
<circle cx="1160.8" cy="454.5" r="4.3" fill="none" stroke="#a0a0a0" stroke-width="1.4"/>
<circle cx="1160.8" cy="454.5" r="3" fill="#000" stroke="none" stroke-width="1"/>
<path d="M1022,517.7 L1028,517.7 M1094,517.7 L1100,517.7 M1168.5,477.9 L1174.5,477.9" stroke="#4a3a50" stroke-width="1.6" fill="none" />
<path d="M985,517.7 L989,515.2 L989,520.2 Z M989,517.7 L992,517.7" stroke="#6a5020" stroke-width="1.2" fill="#c08020" />
<path d="M1056.6,517.7 L1060.6,515.2 L1060.6,520.2 Z M1060.6,517.7 L1063.6,517.7" stroke="#6a5020" stroke-width="1.2" fill="#c08020" />
<path d="M1169,447.9 L1173,445.4 L1173,450.4 Z M1173,447.9 L1176,447.9" stroke="#6a5020" stroke-width="1.2" fill="#c08020" />
<path d="M1251.6,490.6 L1251.6,509.5" stroke="#1e1e1e" stroke-width="2" fill="none" />
<rect x="1233" y="508.25" width="36" height="2.5" fill="#1e1e1e" />
<rect x="1239" y="514.75" width="23" height="2.5" fill="#1e1e1e" />
<rect x="1245" y="520.75" width="11" height="2.5" fill="#1e1e1e" />
<rect x="279.5" y="689.5" width="107.5" height="71" fill="#1e1e1e" />
<rect x="281.5" y="691.5" width="103.5" height="67" fill="#c0dcc0" />
<rect x="283.6" y="699" width="29" height="21.5" fill="#f4f4f4" />
<rect x="285.6" y="701" width="25" height="17.5" fill="#c0c0c0" />
<rect x="319" y="699" width="29.6" height="21.5" fill="#f4f4f4" />
<rect x="321" y="701" width="25.6" height="17.5" fill="#c0c0c0" />
<rect x="355" y="699" width="29" height="21.5" fill="#f4f4f4" />
<rect x="357" y="701" width="25" height="17.5" fill="#c0c0c0" />
<path d="M285.5,714.5 L292,707.5 L298,714.5 L304,707.5 L308,710.5 L311,711" stroke="#333" stroke-width="1.6" fill="none" />
<path d="M321,708 L327,715 L333,708" stroke="#333" stroke-width="1.6" fill="none" />
<path d="M335,712 L340,707 L345,712" stroke="#333" stroke-width="1.6" fill="none" />
<path d="M357.5,714.5 L363,714.5 L363,707.5 L370,707.5 L370,714.5 L375,714.5 L375,708 L381,708" stroke="#222" stroke-width="2" fill="none" />
<path d="M292,735.6 L303,735.6 M297.3,730 L297.3,741 M364,735.6 L374,735.6" stroke="#1e1e1e" stroke-width="2" fill="none" />
<path d="M297.3,743.5 L302.8,749 L297.3,754.5 L291.8,749 Z" stroke="#1e1e1e" stroke-width="1.5" fill="#909090" />
<path d="M333,743.5 L338.5,749 L333,754.5 L327.5,749 Z" stroke="#1e1e1e" stroke-width="1.5" fill="#909090" />
<path d="M369,743.5 L374.5,749 L369,754.5 L363.5,749 Z" stroke="#1e1e1e" stroke-width="1.5" fill="#909090" />
<text x="300.50" y="680.80" font-family="'Liberation Serif'" font-size="22.14" font-weight="bold" fill="#000" textLength="63.26" lengthAdjust="spacingAndGlyphs" >XFG1</text>
<path d="M297.3,752 L297.3,779" stroke="#1e1e1e" stroke-width="2" fill="none" />
<path d="M333,752 L333,779" stroke="#1e1e1e" stroke-width="2" fill="none" />
<path d="M369,752 L369,779" stroke="#1e1e1e" stroke-width="2" fill="none" />
<path d="M333,817 L333,834" stroke="#1e1e1e" stroke-width="2" fill="none" />
<rect x="315" y="832.75" width="36" height="2.5" fill="#1e1e1e" />
<rect x="321" y="838.75" width="24" height="2.5" fill="#1e1e1e" />
<rect x="327.4" y="844.75" width="11.6" height="2.5" fill="#1e1e1e" />
<path d="M299,996 L335,996" stroke="#1e1e1e" stroke-width="2" fill="none" />
<path d="M349,996 L387,996" stroke="#1e1e1e" stroke-width="2" fill="none" />
<rect x="334.7" y="977" width="3" height="37" fill="#1e1e1e" />
<rect x="346.7" y="977" width="3" height="37" fill="#1e1e1e" />
<text x="324.37" y="969.10" font-family="'Liberation Sans'" font-size="27.33" font-weight="bold" fill="#000" textLength="32.51" lengthAdjust="spacingAndGlyphs" >C2</text>
<text x="319.30" y="1044.80" font-family="'Liberation Sans'" font-size="27.91" font-weight="bold" fill="#000" textLength="72.93" lengthAdjust="spacingAndGlyphs" >220nF</text>
<path d="M748,725.6 L748,743.8" stroke="#1e1e1e" stroke-width="2" fill="none" />
<rect x="723" y="742.4" width="47.5" height="2.8" fill="#1e1e1e" />
<rect x="735.2" y="754.3" width="23.5" height="2.8" fill="#1e1e1e" />
<rect x="723" y="766.4" width="47.5" height="2.8" fill="#1e1e1e" />
<rect x="735.2" y="778.5" width="23.5" height="2.8" fill="#1e1e1e" />
<path d="M748,779.9 L748,796.6" stroke="#1e1e1e" stroke-width="2" fill="none" />
<path d="M748,816.4 L748,833.7" stroke="#1e1e1e" stroke-width="2" fill="none" />
<rect x="728.8" y="832.45" width="35.8" height="2.5" fill="#1e1e1e" />
<rect x="735" y="838.65" width="23.7" height="2.5" fill="#1e1e1e" />
<rect x="741" y="844.55" width="11.9" height="2.5" fill="#1e1e1e" />
<text x="776.00" y="744.60" font-family="'Liberation Sans'" font-size="26.89" font-weight="bold" fill="#000" textLength="28.05" lengthAdjust="spacingAndGlyphs" >V1</text>
<text x="775.97" y="772.60" font-family="'Liberation Sans'" font-size="27.33" font-weight="bold" fill="#000" textLength="52.00" lengthAdjust="spacingAndGlyphs" >12 V</text>
<path d="M784,977.2 L891,1032 L784,1086.6 Z" stroke="#1a1aff" stroke-width="2.2" fill="none" />
<path d="M748.8,995.8 L784,995.8" stroke="#1a1aff" stroke-width="2" fill="none" />
<path d="M748.8,1067.5 L784,1067.5" stroke="#1a1aff" stroke-width="2" fill="none" />
<path d="M891,1032 L926.7,1032" stroke="#1a1aff" stroke-width="2" fill="none" />
<path d="M820.2,943.4 L820.2,995" stroke="#1a1aff" stroke-width="2" fill="none" />
<path d="M820.2,1068 L820.2,1130" stroke="#1a1aff" stroke-width="2" fill="none" />
<path d="M789,1002 L801,1002 M795,996 L795,1008 M790,1062 L803,1062" stroke="#1a1aff" stroke-width="2" fill="none" />
<text x="756.00" y="994.00" font-family="'Liberation Sans'" font-size="13.81" font-weight="normal" fill="#1a1aff" >3</text>
<text x="756.50" y="1066.00" font-family="'Liberation Sans'" font-size="13.81" font-weight="normal" fill="#1a1aff" >2</text>
<text x="899.00" y="1030.00" font-family="'Liberation Sans'" font-size="13.81" font-weight="normal" fill="#1a1aff" >1</text>
<text x="824.00" y="966.00" font-family="'Liberation Sans'" font-size="13.81" font-weight="normal" fill="#1a1aff" >8</text>
<text x="824.00" y="1110.00" font-family="'Liberation Sans'" font-size="13.81" font-weight="normal" fill="#1a1aff" >4</text>
<text x="895.42" y="970.60" font-family="'Liberation Sans'" font-size="27.62" font-weight="bold" fill="#1a1aff" textLength="48.52" lengthAdjust="spacingAndGlyphs" >U1A</text>
<text x="805.46" y="1132.60" font-family="'Liberation Sans'" font-size="26.89" font-weight="bold" fill="#1a1aff" textLength="114.72" lengthAdjust="spacingAndGlyphs" >LM358AD</text>
<path d="M820.2,1130 L820.2,1140" stroke="#ff1a1a" stroke-width="2.2" fill="none" />
<path d="M983,1032 L1017,1032" stroke="#1e1e1e" stroke-width="2" fill="none" />
<path d="M1044,1032 L1089,1032" stroke="#1e1e1e" stroke-width="2" fill="none" />
<path d="M1017.3,1013.3 L1044,1032 L1017.3,1048.8 Z" stroke="#1e1e1e" stroke-width="1" fill="#1e1e1e" />
<rect x="1042.9" y="1015" width="2.2" height="29.3" fill="#1e1e1e" />
<text x="1019.70" y="1006.90" font-family="'Liberation Sans'" font-size="27.62" font-weight="bold" fill="#000" textLength="28.29" lengthAdjust="spacingAndGlyphs" >D1</text>
<text x="933.28" y="1076.70" font-family="'Liberation Sans'" font-size="27.62" font-weight="bold" fill="#000" textLength="204.39" lengthAdjust="spacingAndGlyphs" >DIODE_VIRTUAL</text>
<path d="M1000,996 L1125.7,996" stroke="#ff1a1a" stroke-width="2.2" fill="none" />
<path d="M890.6,1193.5 L911,1193.5" stroke="#1e1e1e" stroke-width="2" fill="none" />
<path d="M962,1193.5 L981,1193.5" stroke="#1e1e1e" stroke-width="2" fill="none" />
<path d="M910.6,1193.5 L916,1183.7 L923.9,1202.3 L934,1183.7 L941.9,1202.3 L952.1,1183.7 L959.9,1202.3 L963.2,1193.5" stroke="#1e1e1e" stroke-width="2" fill="none" />
<path d="M890.6,1301 L911,1301" stroke="#1e1e1e" stroke-width="2" fill="none" />
<path d="M962,1301 L981,1301" stroke="#1e1e1e" stroke-width="2" fill="none" />
<path d="M910.6,1301 L916,1291.2 L923.9,1309.8 L934,1291.2 L941.9,1309.8 L952.1,1291.2 L959.9,1309.8 L963.2,1301" stroke="#1e1e1e" stroke-width="2" fill="none" />
<text x="918.87" y="1176.50" font-family="'Liberation Sans'" font-size="26.16" font-weight="bold" fill="#000" textLength="31.21" lengthAdjust="spacingAndGlyphs" >R4</text>
<text x="897.30" y="1230.60" font-family="'Liberation Sans'" font-size="26.89" font-weight="bold" fill="#000" textLength="76.51" lengthAdjust="spacingAndGlyphs" >540kΩ</text>
<text x="918.91" y="1284.70" font-family="'Liberation Sans'" font-size="26.16" font-weight="bold" fill="#000" textLength="29.88" lengthAdjust="spacingAndGlyphs" >R1</text>
<text x="897.30" y="1338.70" font-family="'Liberation Sans'" font-size="26.89" font-weight="bold" fill="#000" textLength="76.51" lengthAdjust="spacingAndGlyphs" >400kΩ</text>
<path d="M820.2,1321 L820.2,1338" stroke="#1e1e1e" stroke-width="2" fill="none" />
<rect x="801" y="1336.75" width="36" height="2.5" fill="#1e1e1e" />
<rect x="807" y="1343.35" width="24" height="2.5" fill="#1e1e1e" />
<rect x="813" y="1349.25" width="12" height="2.5" fill="#1e1e1e" />
<path d="M514,1339 L514,1356" stroke="#1e1e1e" stroke-width="2" fill="none" />
<path d="M514,1356 L524.8,1361.61 L505,1370.03 L524.8,1379.54 L505,1387.96 L524.8,1397.18 L505,1405.99 L514,1409" stroke="#1e1e1e" stroke-width="2" fill="none" />
<path d="M514,1409 L514,1427" stroke="#1e1e1e" stroke-width="2" fill="none" />
<path d="M514,1447.8 L514,1463.6" stroke="#1e1e1e" stroke-width="2" fill="none" />
<rect x="494.7" y="1462.35" width="36" height="2.5" fill="#1e1e1e" />
<rect x="501.3" y="1468.55" width="23.5" height="2.5" fill="#1e1e1e" />
<rect x="507.2" y="1474.45" width="11.8" height="2.5" fill="#1e1e1e" />
<text x="526.73" y="1364.00" font-family="'Liberation Sans'" font-size="26.16" font-weight="bold" fill="#000" textLength="32.40" lengthAdjust="spacingAndGlyphs" >R2</text>
<text x="527.57" y="1392.70" font-family="'Liberation Sans'" font-size="26.89" font-weight="bold" fill="#000" textLength="75.54" lengthAdjust="spacingAndGlyphs" >100kΩ</text>
<path d="M693.7,1375 L693.7,1392" stroke="#1e1e1e" stroke-width="2" fill="none" />
<path d="M693.7,1392 L704.5,1397.67 L684.7,1406.19 L704.5,1415.81 L684.7,1424.32 L704.5,1433.64 L684.7,1442.56 L693.7,1445.6" stroke="#1e1e1e" stroke-width="2" fill="none" />
<path d="M693.7,1445.6 L693.7,1463" stroke="#1e1e1e" stroke-width="2" fill="none" />
<path d="M693.7,1483 L693.7,1499.5" stroke="#1e1e1e" stroke-width="2" fill="none" />
<rect x="675" y="1498.25" width="36" height="2.5" fill="#1e1e1e" />
<rect x="681" y="1504.55" width="23.7" height="2.5" fill="#1e1e1e" />
<rect x="687" y="1510.45" width="11.8" height="2.5" fill="#1e1e1e" />
<text x="706.66" y="1400.00" font-family="'Liberation Sans'" font-size="26.16" font-weight="bold" fill="#000" textLength="31.56" lengthAdjust="spacingAndGlyphs" >R3</text>
<text x="707.30" y="1428.70" font-family="'Liberation Sans'" font-size="26.89" font-weight="bold" fill="#000" textLength="75.71" lengthAdjust="spacingAndGlyphs" >260kΩ</text>
<path d="M1174,1267 L1174,1285.5 L1127,1285.5" stroke="#dcdcdc" stroke-width="1.5" fill="none" />
<rect x="1168.7" y="1194.5" width="140.7" height="72.2" fill="#ffffb4" rx="4" stroke="#e8e8c8" stroke-width="1"/>
<text x="1178.40" y="1220.70" font-family="'Liberation Sans'" font-size="21.51" font-weight="normal" fill="#000" textLength="86.45" lengthAdjust="spacingAndGlyphs" >V: 4.92 V</text>
<text x="1177.34" y="1246.80" font-family="'Liberation Sans'" font-size="21.51" font-weight="normal" fill="#000" textLength="105.26" lengthAdjust="spacingAndGlyphs" >I: -14.5 uA</text>
<path d="M1117,1293 L1135,1293 L1126,1310 Z" stroke="none" stroke-width="0" fill="#00d000" />
<text x="1130.84" y="1314.60" font-family="'Liberation Sans'" font-size="20.35" font-weight="normal" fill="#1a1a40" textLength="69.48" lengthAdjust="spacingAndGlyphs" >Probe1</text>
<path d="M1125.7,1321.3 L1125.7,1359.5" stroke="#1e1e1e" stroke-width="2" fill="none" />
<rect x="1107" y="1357.7" width="38" height="3.6" fill="#1e1e1e" />
<rect x="1107" y="1368.9" width="38" height="3.6" fill="#1e1e1e" />
<path d="M1125.7,1370.7 L1125.7,1409" stroke="#1e1e1e" stroke-width="2" fill="none" />
<path d="M1125.7,1429 L1125.7,1445.6" stroke="#1e1e1e" stroke-width="2" fill="none" />
<rect x="1107" y="1444.35" width="36" height="2.5" fill="#1e1e1e" />
<rect x="1113" y="1450.75" width="24" height="2.5" fill="#1e1e1e" />
<rect x="1118.7" y="1456.95" width="12.6" height="2.5" fill="#1e1e1e" />
<text x="1148.80" y="1346.10" font-family="'Liberation Sans'" font-size="25.44" font-weight="bold" fill="#000" textLength="29.12" lengthAdjust="spacingAndGlyphs" >C1</text>
<text x="1149.78" y="1373.60" font-family="'Liberation Sans'" font-size="26.16" font-weight="bold" fill="#000" textLength="56.00" lengthAdjust="spacingAndGlyphs" >10μF</text>
<rect x="1855" y="161" width="548" height="490" fill="#5b9ae0" />
<rect x="1856" y="162" width="546" height="488" fill="#6cacf4" />
<rect x="1869.5" y="222" width="518.5" height="414" fill="#4f8ad6" />
<rect x="1870.5" y="223" width="516.5" height="412" fill="#ffffff" />
<rect x="1871.5" y="224" width="514.5" height="410" fill="#f0f0f0" />
<rect x="2322" y="162" width="66" height="41" fill="#c75050" />
<path d="M2348.5,176 L2361.5,189 M2361.5,176 L2348.5,189" stroke="#fff" stroke-width="2.2" fill="none" />
<text x="1958.98" y="203.60" font-family="'Liberation Sans'" font-size="28.78" font-weight="normal" fill="#000" textLength="336.23" lengthAdjust="spacingAndGlyphs" >Function Generator-XFG1</text>
<rect x="1878" y="238" width="12" height="2" fill="#dcdcdc" />
<rect x="2007" y="238" width="369" height="2" fill="#dcdcdc" />
<rect x="1878" y="238" width="2" height="73" fill="#dcdcdc" />
<rect x="2374" y="238" width="2" height="73" fill="#dcdcdc" />
<rect x="1878" y="310" width="12" height="2" fill="#dcdcdc" />
<rect x="2030" y="310" width="346" height="2" fill="#dcdcdc" />
<rect x="1878" y="310" width="2" height="239" fill="#dcdcdc" />
<rect x="2374" y="310" width="2" height="239" fill="#dcdcdc" />
<rect x="1878" y="547" width="498" height="2" fill="#dcdcdc" />
<text x="1894.60" y="246.70" font-family="'Liberation Sans'" font-size="21.51" font-weight="normal" fill="#000" textLength="109.76" lengthAdjust="spacingAndGlyphs" >Waveforms</text>
<text x="1894.60" y="318.50" font-family="'Liberation Sans'" font-size="21.51" font-weight="normal" fill="#000" textLength="131.93" lengthAdjust="spacingAndGlyphs" >Signal options</text>
<rect x="1899.2" y="259" width="149.5" height="31.5" fill="#5aa0e6" />
<rect x="1901.2" y="261" width="145.5" height="27.5" fill="url(#gsel)" />
<rect x="2055.4" y="259" width="148.8" height="31.5" fill="#adadad" />
<rect x="2057.4" y="261" width="144.8" height="27.5" fill="url(#gbtn)" />
<rect x="2211.7" y="259" width="150.8" height="31.5" fill="#adadad" />
<rect x="2213.7" y="261" width="146.8" height="27.5" fill="url(#gbtn)" />
<path d="M1928.9,277.895 L1929.9,277.379 L1930.9,276.826 L1931.9,276.244 L1932.9,275.64 L1933.9,275.023 L1934.9,274.401 L1935.9,273.782 L1936.9,273.175 L1937.9,272.588 L1938.9,272.029 L1939.9,271.505 L1940.9,271.024 L1941.9,270.592 L1942.9,270.215 L1943.9,269.897 L1944.9,269.644 L1945.9,269.459 L1946.9,269.344 L1947.9,269.3 L1948.9,269.329 L1949.9,269.43 L1950.9,269.602 L1951.9,269.841 L1952.9,270.146 L1953.9,270.512 L1954.9,270.934 L1955.9,271.405 L1956.9,271.921 L1957.9,272.474 L1958.9,273.056 L1959.9,273.66 L1960.9,274.277 L1961.9,274.899 L1962.9,275.518 L1963.9,276.125 L1964.9,276.712 L1965.9,277.271 L1966.9,277.795 L1967.9,278.276 L1968.9,278.708 L1969.9,279.085 L1970.9,279.403 L1971.9,279.656 L1972.9,279.841 L1973.9,279.956 L1974.9,280 L1975.9,279.971 L1976.9,279.87 L1977.9,279.698 L1978.9,279.459 L1979.9,279.154 L1980.9,278.788 L1981.9,278.366 L1982.9,277.895 L1983.9,277.379 L1984.9,276.826 L1985.9,276.244 L1986.9,275.64 L1987.9,275.023 L1988.9,274.401 L1989.9,273.782 L1990.9,273.175 L1991.9,272.588 L1992.9,272.029 L1993.9,271.505 L1994.9,271.024 L1995.9,270.592 L1996.9,270.215 L1997.9,269.897 L1998.9,269.644 L1999.9,269.459 L2000.9,269.344 L2001.9,269.3 L2002.9,269.329 L2003.9,269.43 L2004.9,269.602 L2005.9,269.841 L2006.9,270.146 L2007.9,270.512 L2008.9,270.934 L2009.9,271.405 L2010.9,271.921 L2011.9,272.474 L2012.9,273.056 L2013.9,273.66 L2014.9,274.277 L2015.9,274.899 L2016.9,275.518 L2017.9,276.125 L2018.9,276.712" stroke="#202020" stroke-width="2" fill="none" />
<path d="M2082.5,280.4 L2102,269.1 L2122.5,279.3 L2139.5,269.1 L2160,279.3 L2173,274.2" stroke="#202020" stroke-width="2" fill="none" />
<path d="M2241,280.4 L2258.7,280.4 L2258.7,269.4 L2278.9,269.4 L2278.9,280.4 L2291,280.4 L2291,269.4 L2311.4,269.4 L2311.4,280.4 L2330.8,280.4" stroke="#202020" stroke-width="2" fill="none" />
<text x="1899.58" y="356.70" font-family="'Liberation Sans'" font-size="21.51" font-weight="normal" fill="#000" textLength="110.02" lengthAdjust="spacingAndGlyphs" >Frequency:</text>
<rect x="2030" y="329.7" width="258" height="37.5" fill="#acacac" />
<rect x="2032" y="331.7" width="254" height="33.5" fill="#fff" />
<rect x="2290" y="329.7" width="78.3" height="37.5" fill="#acacac" />
<rect x="2292" y="331.7" width="74.3" height="33.5" fill="#fff" />
<text x="2041.80" y="356.70" font-family="'Liberation Sans'" font-size="21.51" font-weight="normal" fill="#000" >50</text>
<text x="2301.90" y="356.70" font-family="'Liberation Sans'" font-size="21.51" font-weight="normal" fill="#000" >Hz</text>
<text x="1899.56" y="395.70" font-family="'Liberation Sans'" font-size="21.51" font-weight="normal" fill="#000" textLength="109.05" lengthAdjust="spacingAndGlyphs" >Duty cycle:</text>
<rect x="2030" y="371.2" width="258" height="33.4" fill="#e3e3e3" />
<rect x="2032" y="373.2" width="254" height="29.4" fill="#f0f0f0" />
<rect x="2290" y="371.2" width="78.3" height="33.4" fill="#e3e3e3" />
<rect x="2292" y="373.2" width="74.3" height="29.4" fill="#f0f0f0" />
<text x="2041.80" y="395.70" font-family="'Liberation Sans'" font-size="21.51" font-weight="normal" fill="#8a8a8a" >50</text>
<text x="2305.00" y="395.70" font-family="'Liberation Sans'" font-size="21.51" font-weight="normal" fill="#8a8a8a" >%</text>
<text x="1900.60" y="433.20" font-family="'Liberation Sans'" font-size="21.51" font-weight="normal" fill="#000" textLength="96.93" lengthAdjust="spacingAndGlyphs" >Amplitude:</text>
<rect x="2030" y="408" width="222" height="38.1" fill="#5aa0e6" />
<rect x="2032" y="410" width="218" height="34.1" fill="#fff" />
<rect x="2290" y="408" width="78.3" height="38.1" fill="#acacac" />
<rect x="2292" y="410" width="74.3" height="34.1" fill="#fff" />
<rect x="2254.6" y="408" width="31.4" height="38.1" fill="#dadada" />
<rect x="2256.6" y="410" width="27.4" height="16.05" fill="url(#gbtn)" />
<rect x="2256.6" y="428.05" width="27.4" height="16.05" fill="url(#gbtn)" />
<path d="M2264,422 L2276,422 L2270,416 Z M2264,432 L2276,432 L2270,438 Z" stroke="none" stroke-width="0" fill="#202020" />
<text x="2039.00" y="433.20" font-family="'Liberation Sans'" font-size="21.51" font-weight="normal" fill="#000" >.625</text>
<text x="2302.90" y="433.20" font-family="'Liberation Sans'" font-size="21.51" font-weight="normal" fill="#000" >Vp</text>
<text x="1899.48" y="473.30" font-family="'Liberation Sans'" font-size="21.51" font-weight="normal" fill="#000" textLength="70.72" lengthAdjust="spacingAndGlyphs" >Offset:</text>
<rect x="2030" y="448.8" width="258" height="34.8" fill="#acacac" />
<rect x="2032" y="450.8" width="254" height="30.8" fill="#fff" />
<rect x="2290" y="448.8" width="78.3" height="34.8" fill="#acacac" />
<rect x="2292" y="450.8" width="74.3" height="30.8" fill="#fff" />
<text x="2041.80" y="473.30" font-family="'Liberation Sans'" font-size="21.51" font-weight="normal" fill="#000" >0</text>
<text x="2302.90" y="473.30" font-family="'Liberation Sans'" font-size="21.51" font-weight="normal" fill="#000" >V</text>
<rect x="1983" y="497.9" width="277.4" height="40.1" fill="#d9d9d9" />
<rect x="1985" y="499.9" width="273.4" height="36.1" fill="#efefef" />
<text x="2041.50" y="526.10" font-family="'Liberation Sans'" font-size="21.51" font-weight="normal" fill="#a0a0a0" textLength="158.45" lengthAdjust="spacingAndGlyphs" >Set rise/Fall time</text>
<path d="M1917,581.6 L1929.5,581.6 M1923.3,575.5 L1923.3,587.5" stroke="#000" stroke-width="2" fill="none" />
<text x="2033.04" y="583.00" font-family="'Liberation Sans'" font-size="21.51" font-weight="normal" fill="#000" textLength="83.58" lengthAdjust="spacingAndGlyphs" >Common</text>
<path d="M2323,587.4 L2335,587.4" stroke="#000" stroke-width="2" fill="none" />
<circle cx="1921.7" cy="603.7" r="11.5" fill="#f0f0f0" stroke="#d4d4d4" stroke-width="2"/>
<circle cx="1921.7" cy="603.7" r="6.8" fill="#6b6b6b" stroke="none" stroke-width="1"/>
<circle cx="2063.6" cy="603.7" r="11.5" fill="#f0f0f0" stroke="#d4d4d4" stroke-width="2"/>
<circle cx="2063.6" cy="603.7" r="6.8" fill="#6b6b6b" stroke="none" stroke-width="1"/>
<circle cx="2327.7" cy="607.8" r="11.5" fill="#f0f0f0" stroke="#d4d4d4" stroke-width="2"/>
<rect x="2381" y="628" width="3" height="3" fill="#b8b8b8" />
<rect x="2375" y="628" width="3" height="3" fill="#b8b8b8" />
<rect x="2369" y="628" width="3" height="3" fill="#b8b8b8" />
<rect x="2381" y="622" width="3" height="3" fill="#b8b8b8" />
<rect x="2375" y="622" width="3" height="3" fill="#b8b8b8" />
<rect x="2381" y="616" width="3" height="3" fill="#b8b8b8" />
<rect x="1477" y="653" width="1148" height="906" fill="#cacaca" />
<rect x="1478" y="654" width="1146" height="904" fill="#ebebeb" />
<rect x="1492.3" y="714" width="1117" height="830" fill="#d6d6d6" />
<rect x="1493.3" y="715" width="1115" height="828" fill="#f0f0f0" />
<rect x="2544" y="654" width="66" height="40.5" fill="#bdbdbd" />
<path d="M2570.5,667.5 L2583.5,680.5 M2583.5,667.5 L2570.5,680.5" stroke="#fff" stroke-width="2.2" fill="none" />
<path d="M2570,668 L2583,681 M2583,668 L2570,681" stroke="none" stroke-width="0" fill="none" />
<text x="1926.52" y="696.80" font-family="'Liberation Sans'" font-size="29.07" font-weight="normal" fill="#000" textLength="245.62" lengthAdjust="spacingAndGlyphs" >Oscilloscope-XSC1</text>
<rect x="1493" y="715" width="1116" height="501.5" fill="#7a7a7a" />
<rect x="1494.5" y="716.5" width="1112.5" height="498" fill="#f6f6f6" />
<rect x="1494.5" y="716.5" width="1108.5" height="494.1" fill="#9a9a9a" />
<rect x="1497" y="719" width="1106" height="491.6" fill="#6a6a6a" />
<rect x="1498.5" y="720.5" width="1104.5" height="490.1" fill="#000000" />
<rect x="1493" y="1217" width="1116" height="1.5" fill="#fafafa" />
<path d="M1623.2,738.3 L1623.2,1195.8" stroke="#c8c8c8" stroke-width="2" fill="none" stroke-dasharray="6,6"/>
<path d="M1730.5,738.3 L1730.5,1195.8" stroke="#c8c8c8" stroke-width="2" fill="none" stroke-dasharray="6,6"/>
<path d="M1837.8,738.3 L1837.8,1195.8" stroke="#c8c8c8" stroke-width="2" fill="none" stroke-dasharray="6,6"/>
<path d="M1945.0,738.3 L1945.0,1195.8" stroke="#c8c8c8" stroke-width="2" fill="none" stroke-dasharray="6,6"/>
<path d="M2052.2,738.3 L2052.2,1195.8" stroke="#c8c8c8" stroke-width="2" fill="none" stroke-dasharray="6,6"/>
<path d="M2159.5,738.3 L2159.5,1195.8" stroke="#c8c8c8" stroke-width="2" fill="none" stroke-dasharray="6,6"/>
<path d="M2266.8,738.3 L2266.8,1195.8" stroke="#c8c8c8" stroke-width="2" fill="none" stroke-dasharray="6,6"/>
<path d="M2374.0,738.3 L2374.0,1195.8" stroke="#c8c8c8" stroke-width="2" fill="none" stroke-dasharray="6,6"/>
<path d="M2481.2,738.3 L2481.2,1195.8" stroke="#c8c8c8" stroke-width="2" fill="none" stroke-dasharray="6,6"/>
<path d="M1516,814.5 L2588.5,814.5" stroke="#c8c8c8" stroke-width="2" fill="none" stroke-dasharray="6,6"/>
<path d="M1516,890.8 L2588.5,890.8" stroke="#c8c8c8" stroke-width="2" fill="none" stroke-dasharray="6,6"/>
<path d="M1516,1043.3 L2588.5,1043.3" stroke="#c8c8c8" stroke-width="2" fill="none" stroke-dasharray="6,6"/>
<path d="M1516,1119.5 L2588.5,1119.5" stroke="#c8c8c8" stroke-width="2" fill="none" stroke-dasharray="6,6"/>
<path d="M1516,738.3 L2588.5,738.3 L2588.5,1195.8 L1516,1195.8" stroke="#e8e8e8" stroke-width="2" fill="none" />
<path d="M1516,967.0 L2588.5,967.0" stroke="#ffffff" stroke-width="2.5" fill="none" />
<path d="M1537.5,967.0 L1537.5,973.0 M1558.9,967.0 L1558.9,973.0 M1580.3,967.0 L1580.3,973.0 M1601.8,967.0 L1601.8,973.0 M1623.2,967.0 L1623.2,973.0 M1644.7,967.0 L1644.7,973.0 M1666.2,967.0 L1666.2,973.0 M1687.6,967.0 L1687.6,973.0 M1709.0,967.0 L1709.0,973.0 M1730.5,967.0 L1730.5,973.0 M1752.0,967.0 L1752.0,973.0 M1773.4,967.0 L1773.4,973.0 M1794.8,967.0 L1794.8,973.0 M1816.3,967.0 L1816.3,973.0 M1837.8,967.0 L1837.8,973.0 M1859.2,967.0 L1859.2,973.0 M1880.7,967.0 L1880.7,973.0 M1902.1,967.0 L1902.1,973.0 M1923.5,967.0 L1923.5,973.0 M1945.0,967.0 L1945.0,973.0 M1966.5,967.0 L1966.5,973.0 M1987.9,967.0 L1987.9,973.0 M2009.3,967.0 L2009.3,973.0 M2030.8,967.0 L2030.8,973.0 M2052.2,967.0 L2052.2,973.0 M2073.7,967.0 L2073.7,973.0 M2095.2,967.0 L2095.2,973.0 M2116.6,967.0 L2116.6,973.0 M2138.1,967.0 L2138.1,973.0 M2159.5,967.0 L2159.5,973.0 M2180.9,967.0 L2180.9,973.0 M2202.4,967.0 L2202.4,973.0 M2223.8,967.0 L2223.8,973.0 M2245.3,967.0 L2245.3,973.0 M2266.8,967.0 L2266.8,973.0 M2288.2,967.0 L2288.2,973.0 M2309.7,967.0 L2309.7,973.0 M2331.1,967.0 L2331.1,973.0 M2352.6,967.0 L2352.6,973.0 M2374.0,967.0 L2374.0,973.0 M2395.4,967.0 L2395.4,973.0 M2416.9,967.0 L2416.9,973.0 M2438.3,967.0 L2438.3,973.0 M2459.8,967.0 L2459.8,973.0 M2481.2,967.0 L2481.2,973.0 M2502.7,967.0 L2502.7,973.0 M2524.2,967.0 L2524.2,973.0 M2545.6,967.0 L2545.6,973.0 M2567.1,967.0 L2567.1,973.0" stroke="#e0e0e0" stroke-width="1.5" fill="none" />
<path d="M1517,942.5 L1517,877.7 L1519.6,864.4 L1539.7,864.4 L1541.7,852.164 L1542.7,841.928 L1561.3,841.928 L1563.3,832.67 L1564.3,825.411 L1582.9,825.411 L1584.9,818.341 L1585.9,813.271 L1604.5,813.271 L1606.5,807.81 L1607.5,804.348 L1626.1,804.348 L1628.1,800.069 L1629.1,797.79 L1647.7,797.79 L1649.7,794.38 L1650.7,792.97 L1669.3,792.97 L1671.3,790.198 L1672.3,789.427 L1690.9,789.427 L1692.9,787.125 L1693.9,786.823 L1712.5,786.823 L1714.5,784.866 L1715.5,784.909 L1734.1,784.909 L1736.1,783.205 L1737.1,783.502 L1755.7,783.502 L1757.7,781.985 L1758.7,782.468 L1777.3,782.468 L1779.3,781.088 L1780.3,781.708 L1798.9,781.708 L1800.9,780.429 L1801.9,781.149 L1820.5,781.149 L1822.5,779.944 L1823.5,780.739 L1842.1,780.739 L1844.1,779.588 L1845.1,780.437 L1863.7,780.437 L1865.7,779.326 L1866.7,780.215 L1885.3,780.215 L1887.3,779.134 L1888.3,780.052 L1906.9,780.052 L1908.9,778.992 L1909.9,779.932 L1928.5,779.932 L1930.5,778.888 L1931.5,779.844 L1950.1,779.844 L1952.1,778.812 L1953.1,779.78 L1971.7,779.78 L1973.7,778.756 L1974.7,779.732 L1993.3,779.732 L1995.3,778.714 L1996.3,779.697 L2014.9,779.697 L2016.9,778.684 L2017.9,779.671 L2036.5,779.671 L2038.5,778.662 L2039.5,779.652 L2058.1,779.652 L2060.1,778.645 L2061.1,779.639 L2079.7,779.639 L2081.7,778.633 L2082.7,779.628 L2101.3,779.628 L2103.3,778.625 L2104.3,779.621 L2122.9,779.621 L2124.9,778.618 L2125.9,779.615 L2144.5,779.615 L2146.5,778.613 L2147.5,779.611 L2166.1,779.611 L2168.1,778.61 L2169.1,779.608 L2187.7,779.608 L2189.7,778.607 L2190.7,779.606 L2209.3,779.606 L2211.3,778.605 L2212.3,779.604 L2230.9,779.604 L2232.9,778.604 L2233.9,779.603 L2252.5,779.603 L2254.5,778.603 L2255.5,779.602 L2274.1,779.602 L2276.1,778.602 L2277.1,779.602 L2295.7,779.602 L2297.7,778.602 L2298.7,779.601 L2317.3,779.601 L2319.3,778.601 L2320.3,779.601 L2338.9,779.601 L2340.9,778.601 L2341.9,779.601 L2360.5,779.601 L2362.5,778.601 L2363.5,779.601 L2382.1,779.601 L2384.1,778.6 L2385.1,779.6 L2403.7,779.6 L2405.7,778.6 L2406.7,779.6 L2425.3,779.6 L2427.3,778.6 L2428.3,779.6 L2446.9,779.6 L2448.9,778.6 L2449.9,779.6 L2468.5,779.6 L2470.5,778.6 L2471.5,779.6 L2490.1,779.6 L2492.1,778.6 L2493.1,779.6 L2511.7,779.6 L2513.7,778.6 L2514.7,779.6 L2533.3,779.6 L2535.3,778.6 L2536.3,779.6 L2547.4,779.6" stroke="#ff0000" stroke-width="2.2" fill="none" stroke-linejoin="miter"/>
<path d="M1516,956 L1518,932 L1519,913 L1521,905 L1523,907 L1525,921 L1526,941 L1528,963 L1530,980 L1531,989 L1533,986 L1535,972 L1537,950 L1538,926 L1540,904 L1542,890 L1543,888 L1545,897 L1547,914 L1549,937 L1550,957 L1552,971 L1554,975 L1555,966 L1557,948 L1559,925 L1561,901 L1562,883 L1564,875 L1566,879 L1567,893 L1569,914 L1571,936 L1573,955 L1574,964 L1576,962 L1578,949 L1579,927 L1581,903 L1583,882 L1585,869 L1586,867 L1588,876 L1590,895 L1592,917 L1593,939 L1595,953 L1597,957 L1598,949 L1600,932 L1602,909 L1604,886 L1605,868 L1607,860 L1609,864 L1610,879 L1612,900 L1614,923 L1616,942 L1617,951 L1619,949 L1621,936 L1622,916 L1624,892 L1626,871 L1628,858 L1629,857 L1631,866 L1633,885 L1634,908 L1636,929 L1638,944 L1640,948 L1641,940 L1643,923 L1645,900 L1646,877 L1648,860 L1650,853 L1652,857 L1653,872 L1655,893 L1657,916 L1658,935 L1660,945 L1662,943 L1664,930 L1665,910 L1667,886 L1669,865 L1670,853 L1672,851 L1674,861 L1676,880 L1677,903 L1679,924 L1681,939 L1682,943 L1684,936 L1686,919 L1688,896 L1689,873 L1691,856 L1693,849 L1694,853 L1696,868 L1698,889 L1700,913 L1701,931 L1703,941 L1705,940 L1706,927 L1708,906 L1710,883 L1712,862 L1713,850 L1715,848 L1717,858 L1718,877 L1720,900 L1722,922 L1724,937 L1725,941 L1727,934 L1729,917 L1730,894 L1732,871 L1734,854 L1736,847 L1737,851 L1739,866 L1741,888 L1743,911 L1744,930 L1746,939 L1748,938 L1749,925 L1751,905 L1753,881 L1755,861 L1756,848 L1758,847 L1760,857 L1761,876 L1763,899 L1765,920 L1767,935 L1768,940 L1770,932 L1772,915 L1773,893 L1775,870 L1777,853 L1779,846 L1780,850 L1782,865 L1784,887 L1785,910 L1787,929 L1789,939 L1791,937 L1792,925 L1794,904 L1796,881 L1797,860 L1799,848 L1801,846 L1803,856 L1804,875 L1806,898 L1808,920 L1809,935 L1811,939 L1813,932 L1815,915 L1816,892 L1818,869 L1820,852 L1821,845 L1823,850 L1825,864 L1827,886 L1828,909 L1830,928 L1832,938 L1833,937 L1835,924 L1837,904 L1839,880 L1840,860 L1842,847 L1844,846 L1845,856 L1847,875 L1849,898 L1851,919 L1852,934 L1854,939 L1856,932 L1857,914 L1859,892 L1861,869 L1863,852 L1864,845 L1866,849 L1868,864 L1869,886 L1871,909 L1873,928 L1875,938 L1876,936 L1878,924 L1880,903 L1882,880 L1883,860 L1885,847 L1887,846 L1888,855 L1890,874 L1892,898 L1894,919 L1895,934 L1897,939 L1899,931 L1900,914 L1902,892 L1904,869 L1906,852 L1907,845 L1909,849 L1911,864 L1912,886 L1914,909 L1916,928 L1918,938 L1919,936 L1921,924 L1923,903 L1924,880 L1926,859 L1928,847 L1930,845 L1931,855 L1933,874 L1935,897 L1936,919 L1938,934 L1940,938 L1942,931 L1943,914 L1945,892 L1947,869 L1948,852 L1950,845 L1952,849 L1954,864 L1955,886 L1957,909 L1959,928 L1960,938 L1962,936 L1964,924 L1966,903 L1967,880 L1969,859 L1971,847 L1972,845 L1974,855 L1976,874 L1978,897 L1979,919 L1981,934 L1983,938 L1984,931 L1986,914 L1988,892 L1990,869 L1991,852 L1993,845 L1995,849 L1996,864 L1998,886 L2000,909 L2002,928 L2003,938 L2005,936 L2007,924 L2008,903 L2010,880 L2012,859 L2014,847 L2015,845 L2017,855 L2019,874 L2021,897 L2022,919 L2024,934 L2026,938 L2027,931 L2029,914 L2031,892 L2033,869 L2034,852 L2036,845 L2038,849 L2039,864 L2041,886 L2043,909 L2045,928 L2046,938 L2048,936 L2050,924 L2051,903 L2053,880 L2055,859 L2057,847 L2058,845 L2060,855 L2062,874 L2063,897 L2065,919 L2067,934 L2069,938 L2070,931 L2072,914 L2074,892 L2075,869 L2077,852 L2079,845 L2081,849 L2082,864 L2084,886 L2086,909 L2087,928 L2089,938 L2091,936 L2093,924 L2094,903 L2096,880 L2098,859 L2099,847 L2101,845 L2103,855 L2105,874 L2106,897 L2108,919 L2110,934 L2111,938 L2113,931 L2115,914 L2117,892 L2118,869 L2120,852 L2122,845 L2123,849 L2125,864 L2127,886 L2129,909 L2130,928 L2132,938 L2134,936 L2135,924 L2137,903 L2139,880 L2141,859 L2142,847 L2144,845 L2146,855 L2147,874 L2149,897 L2151,919 L2153,934 L2154,938 L2156,931 L2158,914 L2160,892 L2161,869 L2163,852 L2165,845 L2166,849 L2168,864 L2170,886 L2172,909 L2173,928 L2175,938 L2177,936 L2178,924 L2180,903 L2182,880 L2184,859 L2185,847 L2187,845 L2189,855 L2190,874 L2192,897 L2194,919 L2196,934 L2197,938 L2199,931 L2201,914 L2202,892 L2204,869 L2206,852 L2208,845 L2209,849 L2211,864 L2213,886 L2214,909 L2216,928 L2218,938 L2220,936 L2221,924 L2223,903 L2225,880 L2226,859 L2228,847 L2230,845 L2232,855 L2233,874 L2235,897 L2237,919 L2238,934 L2240,938 L2242,931 L2244,914 L2245,892 L2247,869 L2249,852 L2250,845 L2252,849 L2254,864 L2256,886 L2257,909 L2259,928 L2261,938 L2262,936 L2264,924 L2266,903 L2268,880 L2269,859 L2271,847 L2273,845 L2274,855 L2276,874 L2278,897 L2280,919 L2281,934 L2283,938 L2285,931 L2286,914 L2288,892 L2290,869 L2292,852 L2293,845 L2295,849 L2297,864 L2298,886 L2300,909 L2302,928 L2304,938 L2305,936 L2307,924 L2309,903 L2311,880 L2312,859 L2314,847 L2316,845 L2317,855 L2319,874 L2321,897 L2323,919 L2324,934 L2326,938 L2328,931 L2329,914 L2331,892 L2333,869 L2335,852 L2336,845 L2338,849 L2340,864 L2341,886 L2343,909 L2345,928 L2347,938 L2348,936 L2350,924 L2352,903 L2353,880 L2355,859 L2357,847 L2359,845 L2360,855 L2362,874 L2364,897 L2365,919 L2367,934 L2369,938 L2371,931 L2372,914 L2374,892 L2376,869 L2377,852 L2379,845 L2381,849 L2383,864 L2384,886 L2386,909 L2388,928 L2389,938 L2391,936 L2393,924 L2395,903 L2396,880 L2398,859 L2400,847 L2401,845 L2403,855 L2405,874 L2407,897 L2408,919 L2410,934 L2412,938 L2413,931 L2415,914 L2417,892 L2419,869 L2420,852 L2422,845 L2424,849 L2425,864 L2427,886 L2429,909 L2431,928 L2432,938 L2434,936 L2436,924 L2437,903 L2439,880 L2441,859 L2443,847 L2444,845 L2446,855 L2448,874 L2450,897 L2451,919 L2453,934 L2455,938 L2456,931 L2458,914 L2460,892 L2462,869 L2463,852 L2465,845 L2467,849 L2468,864 L2470,886 L2472,909 L2474,928 L2475,938 L2477,936 L2479,924 L2480,903 L2482,880 L2484,859 L2486,847 L2487,845 L2489,855 L2491,874 L2492,897 L2494,919 L2496,934 L2498,938 L2499,931 L2501,914 L2503,892 L2504,869 L2506,852 L2508,845 L2510,849 L2511,864 L2513,886 L2515,909 L2516,928 L2518,938 L2520,936 L2522,924 L2523,903 L2525,880 L2527,859 L2528,847 L2530,845 L2532,855 L2534,874 L2535,897 L2537,919 L2539,934 L2540,938 L2542,931 L2544,914 L2546,892 L2547,869" stroke="#ff0000" stroke-width="2" fill="none" stroke-linejoin="miter" stroke-miterlimit="2"/>
<path d="M1516,737 L1516,1195.8" stroke="#00e000" stroke-width="2" fill="none" />
<path d="M1499,721 L1533,721 L1516,737 Z" stroke="none" stroke-width="0" fill="#ff00ff" />
<path d="M1499,721 L1533,721 L1530,724 L1502,724 Z" stroke="none" stroke-width="0" fill="#00e0ff" />
<text x="1512.50" y="732.00" font-family="'Liberation Sans'" font-size="11.63" font-weight="bold" fill="#e0e000" >1</text>
<circle cx="1514.8" cy="898.7" r="5" fill="none" stroke="#ff00ff" stroke-width="1.5"/>
<rect x="1525" y="1219.5" width="1048" height="21.5" fill="#cdcdcd" />
<path d="M1514,1224 L1506,1230.5 L1514,1237" stroke="#606060" stroke-width="3" fill="none" />
<path d="M2587,1224 L2595,1230.5 L2587,1237" stroke="#606060" stroke-width="3" fill="none" />
<rect x="1494" y="1251.5" width="117" height="117.5" fill="#a8a8a8" />
<rect x="1496" y="1253.5" width="113" height="113.5" fill="#f0f0f0" />
<text x="1504.90" y="1288.50" font-family="'Liberation Sans'" font-size="20.93" font-weight="normal" fill="#000" >T1</text>
<text x="1504.90" y="1316.00" font-family="'Liberation Sans'" font-size="20.93" font-weight="normal" fill="#000" >T2</text>
<text x="1504.90" y="1355.80" font-family="'Liberation Sans'" font-size="20.93" font-weight="normal" fill="#000" >T2-T1</text>
<rect x="1545" y="1265.7" width="25.6" height="30.3" fill="#c8c8c8" />
<rect x="1546.5" y="1267.2" width="22.6" height="27.3" fill="#e6e6e6" />
<path d="M1548.8,1280.85 L1556.8,1272.85 L1556.8,1277.85 L1566.8,1277.85 L1566.8,1283.85 L1556.8,1283.85 L1556.8,1288.85 Z" stroke="none" stroke-width="0" fill="#000" />
<rect x="1579" y="1265.7" width="25.4" height="30.3" fill="#c8c8c8" />
<rect x="1580.5" y="1267.2" width="22.4" height="27.3" fill="#e6e6e6" />
<path d="M1600.7,1280.85 L1592.7,1272.85 L1592.7,1277.85 L1582.7,1277.85 L1582.7,1283.85 L1592.7,1283.85 L1592.7,1288.85 Z" stroke="none" stroke-width="0" fill="#000" />
<rect x="1545" y="1301.5" width="25.6" height="26.7" fill="#c8c8c8" />
<rect x="1546.5" y="1303" width="22.6" height="23.7" fill="#e6e6e6" />
<path d="M1548.8,1314.85 L1556.8,1306.85 L1556.8,1311.85 L1566.8,1311.85 L1566.8,1317.85 L1556.8,1317.85 L1556.8,1322.85 Z" stroke="none" stroke-width="0" fill="#000" />
<rect x="1579" y="1301.5" width="25.4" height="26.7" fill="#c8c8c8" />
<rect x="1580.5" y="1303" width="22.4" height="23.7" fill="#e6e6e6" />
<path d="M1600.7,1314.85 L1592.7,1306.85 L1592.7,1311.85 L1582.7,1311.85 L1582.7,1317.85 L1592.7,1317.85 L1592.7,1322.85 Z" stroke="none" stroke-width="0" fill="#000" />
<rect x="1613.5" y="1252" width="658.5" height="116" fill="#f8f8f8" />
<rect x="1613.5" y="1252" width="658.5" height="3" fill="#6e6e6e" />
<rect x="1613.5" y="1252" width="3.5" height="116" fill="#6e6e6e" />
<rect x="1617" y="1255" width="653" height="111" fill="#ffffff" />
<text x="1663.20" y="1276.30" font-family="'Liberation Sans'" font-size="20.93" font-weight="normal" fill="#000" textLength="44.42" lengthAdjust="spacingAndGlyphs" >Time</text>
<text x="1646.00" y="1302.20" font-family="'Liberation Sans'" font-size="20.93" font-weight="normal" fill="#000" textLength="72.08" lengthAdjust="spacingAndGlyphs" >0.000 s</text>
<text x="1646.00" y="1328.20" font-family="'Liberation Sans'" font-size="20.93" font-weight="normal" fill="#000" textLength="72.08" lengthAdjust="spacingAndGlyphs" >0.000 s</text>
<text x="1646.00" y="1353.80" font-family="'Liberation Sans'" font-size="20.93" font-weight="normal" fill="#000" textLength="72.08" lengthAdjust="spacingAndGlyphs" >0.000 s</text>
<text x="1793.19" y="1276.50" font-family="'Liberation Sans'" font-size="20.93" font-weight="normal" fill="#000" textLength="104.06" lengthAdjust="spacingAndGlyphs" >Channel_A</text>
<text x="1807.40" y="1302.20" font-family="'Liberation Sans'" font-size="20.93" font-weight="normal" fill="#000" >1.785 V</text>
<text x="1807.40" y="1328.20" font-family="'Liberation Sans'" font-size="20.93" font-weight="normal" fill="#000" >1.785 V</text>
<text x="1806.40" y="1353.80" font-family="'Liberation Sans'" font-size="20.93" font-weight="normal" fill="#000" textLength="72.95" lengthAdjust="spacingAndGlyphs" >0.000 V</text>
<text x="1953.50" y="1276.50" font-family="'Liberation Sans'" font-size="20.93" font-weight="normal" fill="#000" >Channel_B</text>
<text x="1949.40" y="1302.20" font-family="'Liberation Sans'" font-size="20.93" font-weight="normal" fill="#000" >315.037 mV</text>
<text x="1949.40" y="1328.20" font-family="'Liberation Sans'" font-size="20.93" font-weight="normal" fill="#000" >315.037 mV</text>
<text x="1966.30" y="1353.80" font-family="'Liberation Sans'" font-size="20.93" font-weight="normal" fill="#000" textLength="73.35" lengthAdjust="spacingAndGlyphs" >0.000 V</text>
<rect x="2289.3" y="1265.5" width="121.4" height="40.9" fill="#adadad" />
<rect x="2291.3" y="1267.5" width="117.4" height="36.9" fill="url(#gbtn)" />
<text x="2305.95" y="1294.80" font-family="'Liberation Sans'" font-size="21.22" font-weight="normal" fill="#000" textLength="82.58" lengthAdjust="spacingAndGlyphs" >Reverse</text>
<rect x="2289.3" y="1321.5" width="121.4" height="40.7" fill="#adadad" />
<rect x="2291.3" y="1323.5" width="117.4" height="36.7" fill="url(#gbtn)" />
<text x="2324.00" y="1350.80" font-family="'Liberation Sans'" font-size="21.22" font-weight="normal" fill="#000" textLength="47.79" lengthAdjust="spacingAndGlyphs" >Save</text>
<text x="2426.23" y="1368.90" font-family="'Liberation Sans'" font-size="21.22" font-weight="normal" fill="#000" textLength="109.84" lengthAdjust="spacingAndGlyphs" >Ext. trigger</text>
<circle cx="2561.5" cy="1363.8" r="11.5" fill="#f0f0f0" stroke="#d4d4d4" stroke-width="2"/>
<circle cx="2561.5" cy="1363.8" r="6.8" fill="#6b6b6b" stroke="none" stroke-width="1"/>
<rect x="2603" y="1537" width="3" height="3" fill="#b8b8b8" />
<rect x="2597" y="1537" width="3" height="3" fill="#b8b8b8" />
<rect x="2591" y="1537" width="3" height="3" fill="#b8b8b8" />
<rect x="2603" y="1531" width="3" height="3" fill="#b8b8b8" />
<rect x="2597" y="1531" width="3" height="3" fill="#b8b8b8" />
<rect x="2603" y="1525" width="3" height="3" fill="#b8b8b8" />
<rect x="1492.6" y="1543" width="1116.7" height="1.5" fill="#d5d5d5" />
<rect x="2607.8" y="1216" width="1.5" height="328" fill="#d5d5d5" />
<rect x="1494.5" y="1396" width="10.5" height="2" fill="#dcdcdc" />
<rect x="1604" y="1396" width="149.5" height="2" fill="#dcdcdc" />
<rect x="1494.5" y="1396" width="2" height="145" fill="#dcdcdc" />
<rect x="1751.5" y="1396" width="2" height="145" fill="#dcdcdc" />
<rect x="1494.5" y="1539" width="259" height="2" fill="#dcdcdc" />
<rect x="1753.7" y="1396" width="10.3" height="2" fill="#dcdcdc" />
<rect x="1872" y="1396" width="137.4" height="2" fill="#dcdcdc" />
<rect x="1753.7" y="1396" width="2" height="145" fill="#dcdcdc" />
<rect x="2007.4" y="1396" width="2" height="145" fill="#dcdcdc" />
<rect x="1753.7" y="1539" width="255.7" height="2" fill="#dcdcdc" />
<rect x="2009.5" y="1396" width="10.5" height="2" fill="#dcdcdc" />
<rect x="2127" y="1396" width="140.4" height="2" fill="#dcdcdc" />
<rect x="2009.5" y="1396" width="2" height="145" fill="#dcdcdc" />
<rect x="2265.4" y="1396" width="2" height="145" fill="#dcdcdc" />
<rect x="2009.5" y="1539" width="257.9" height="2" fill="#dcdcdc" />
<rect x="2268.5" y="1396" width="10.5" height="2" fill="#dcdcdc" />
<rect x="2356" y="1396" width="252" height="2" fill="#dcdcdc" />
<rect x="2268.5" y="1396" width="2" height="145" fill="#dcdcdc" />
<rect x="2606" y="1396" width="2" height="145" fill="#dcdcdc" />
<rect x="2268.5" y="1539" width="339.5" height="2" fill="#dcdcdc" />
<text x="1511.60" y="1405.00" font-family="'Liberation Sans'" font-size="21.22" font-weight="normal" fill="#000" textLength="88.47" lengthAdjust="spacingAndGlyphs" >Timebase</text>
<text x="1769.52" y="1405.00" font-family="'Liberation Sans'" font-size="21.22" font-weight="normal" fill="#000" textLength="97.25" lengthAdjust="spacingAndGlyphs" >Channel A</text>
<text x="2025.32" y="1405.00" font-family="'Liberation Sans'" font-size="21.22" font-weight="normal" fill="#000" textLength="96.83" lengthAdjust="spacingAndGlyphs" >Channel B</text>
<text x="2285.40" y="1404.70" font-family="'Liberation Sans'" font-size="21.22" font-weight="normal" fill="#000" textLength="65.67" lengthAdjust="spacingAndGlyphs" >Trigger</text>
<text x="1498.50" y="1440.90" font-family="'Liberation Sans'" font-size="21.22" font-weight="normal" fill="#000" textLength="57.34" lengthAdjust="spacingAndGlyphs" >Scale:</text>
<rect x="1571.5" y="1409.7" width="168.8" height="38.5" fill="#acacac" />
<rect x="1573.5" y="1411.7" width="164.8" height="34.5" fill="#fff" />
<text x="1583.72" y="1437.20" font-family="'Liberation Sans'" font-size="20.93" font-weight="normal" fill="#000" textLength="102.75" lengthAdjust="spacingAndGlyphs" >100 ms/Div</text>
<text x="1498.50" y="1481.80" font-family="'Liberation Sans'" font-size="21.22" font-weight="normal" fill="#000" textLength="114.46" lengthAdjust="spacingAndGlyphs" >X pos.(Div):</text>
<rect x="1621.7" y="1451.8" width="118.6" height="38.7" fill="#acacac" />
<rect x="1623.7" y="1453.8" width="114.6" height="34.7" fill="#fff" />
<text x="1632.20" y="1478.90" font-family="'Liberation Sans'" font-size="20.93" font-weight="normal" fill="#000" >0</text>
<rect x="1509.2" y="1499.3" width="47.3" height="35.1" fill="#5aa0e6" />
<rect x="1511.2" y="1501.3" width="43.3" height="31.1" fill="url(#gsel)" />
<text x="1516.33" y="1524.15" font-family="'Liberation Sans'" font-size="21.22" font-weight="normal" fill="#000" >Y/T</text>
<rect x="1561.3" y="1499.3" width="51.2" height="35.1" fill="#adadad" />
<rect x="1563.3" y="1501.3" width="47.2" height="31.1" fill="url(#gbtn)" />
<text x="1568.42" y="1524.15" font-family="'Liberation Sans'" font-size="21.22" font-weight="normal" fill="#000" >Add</text>
<rect x="1621.2" y="1499.3" width="51.2" height="35.1" fill="#adadad" />
<rect x="1623.2" y="1501.3" width="47.2" height="31.1" fill="url(#gbtn)" />
<text x="1628.78" y="1524.15" font-family="'Liberation Sans'" font-size="21.22" font-weight="normal" fill="#000" >B/A</text>
<rect x="1677.2" y="1499.3" width="53.2" height="35.1" fill="#adadad" />
<rect x="1679.2" y="1501.3" width="49.2" height="31.1" fill="url(#gbtn)" />
<text x="1686.78" y="1524.15" font-family="'Liberation Sans'" font-size="21.22" font-weight="normal" fill="#000" >A/B</text>
<text x="1758.80" y="1440.90" font-family="'Liberation Sans'" font-size="21.22" font-weight="normal" fill="#000" textLength="57.34" lengthAdjust="spacingAndGlyphs" >Scale:</text>
<rect x="1831.8" y="1409.7" width="170.2" height="38.5" fill="#acacac" />
<rect x="1833.8" y="1411.7" width="166.2" height="34.5" fill="#fff" />
<text x="1841.81" y="1437.20" font-family="'Liberation Sans'" font-size="20.93" font-weight="normal" fill="#000" textLength="72.76" lengthAdjust="spacingAndGlyphs" >2  V/Div</text>
<text x="1758.80" y="1481.80" font-family="'Liberation Sans'" font-size="21.22" font-weight="normal" fill="#000" textLength="113.64" lengthAdjust="spacingAndGlyphs" >Y pos.(Div):</text>
<rect x="1883.7" y="1451.8" width="118.3" height="38.7" fill="#acacac" />
<rect x="1885.7" y="1453.8" width="114.3" height="34.7" fill="#fff" />
<text x="1894.70" y="1478.90" font-family="'Liberation Sans'" font-size="20.93" font-weight="normal" fill="#000" >0</text>
<rect x="1761.4" y="1499.3" width="47" height="35.1" fill="#adadad" />
<rect x="1763.4" y="1501.3" width="43" height="31.1" fill="url(#gbtn)" />
<text x="1770.32" y="1524.15" font-family="'Liberation Sans'" font-size="21.22" font-weight="normal" fill="#000" >AC</text>
<rect x="1813.6" y="1499.3" width="48.9" height="35.1" fill="#adadad" />
<rect x="1815.6" y="1501.3" width="44.9" height="31.1" fill="url(#gbtn)" />
<text x="1832.55" y="1524.15" font-family="'Liberation Sans'" font-size="21.22" font-weight="normal" fill="#000" >0</text>
<rect x="1867.6" y="1499.3" width="49" height="35.1" fill="#5aa0e6" />
<rect x="1869.6" y="1501.3" width="45" height="31.1" fill="url(#gsel)" />
<text x="1876.44" y="1524.15" font-family="'Liberation Sans'" font-size="21.22" font-weight="normal" fill="#000" >DC</text>
<circle cx="1979.7" cy="1513.9" r="11.5" fill="#f0f0f0" stroke="#d4d4d4" stroke-width="2"/>
<circle cx="1979.7" cy="1513.9" r="6.8" fill="#6b6b6b" stroke="none" stroke-width="1"/>
<text x="2014.60" y="1440.90" font-family="'Liberation Sans'" font-size="21.22" font-weight="normal" fill="#000" textLength="57.34" lengthAdjust="spacingAndGlyphs" >Scale:</text>
<rect x="2089.9" y="1409.7" width="170.1" height="38.5" fill="#acacac" />
<rect x="2091.9" y="1411.7" width="166.1" height="34.5" fill="#fff" />
<text x="2101.33" y="1437.20" font-family="'Liberation Sans'" font-size="20.93" font-weight="normal" fill="#000" textLength="71.15" lengthAdjust="spacingAndGlyphs" >1  V/Div</text>
<text x="2014.60" y="1481.80" font-family="'Liberation Sans'" font-size="21.22" font-weight="normal" fill="#000" textLength="113.75" lengthAdjust="spacingAndGlyphs" >Y pos.(Div):</text>
<rect x="2141.7" y="1451.8" width="118.3" height="38.7" fill="#acacac" />
<rect x="2143.7" y="1453.8" width="114.3" height="34.7" fill="#fff" />
<text x="2152.70" y="1478.90" font-family="'Liberation Sans'" font-size="20.93" font-weight="normal" fill="#000" >0</text>
<rect x="2019.7" y="1503.7" width="42.8" height="32.1" fill="#adadad" />
<rect x="2021.7" y="1505.7" width="38.8" height="28.1" fill="url(#gbtn)" />
<text x="2026.52" y="1527.05" font-family="'Liberation Sans'" font-size="21.22" font-weight="normal" fill="#000" >AC</text>
<rect x="2067.5" y="1503.7" width="42.8" height="32.1" fill="#adadad" />
<rect x="2069.5" y="1505.7" width="38.8" height="28.1" fill="url(#gbtn)" />
<text x="2083.40" y="1527.05" font-family="'Liberation Sans'" font-size="21.22" font-weight="normal" fill="#000" >0</text>
<rect x="2115.4" y="1503.7" width="49" height="32.1" fill="#5aa0e6" />
<rect x="2117.4" y="1505.7" width="45" height="28.1" fill="url(#gsel)" />
<text x="2124.24" y="1527.05" font-family="'Liberation Sans'" font-size="21.22" font-weight="normal" fill="#000" >DC</text>
<rect x="2169.5" y="1503.7" width="35.1" height="32.1" fill="#adadad" />
<rect x="2171.5" y="1505.7" width="31.1" height="28.1" fill="url(#gbtn)" />
<text x="2183.55" y="1527.05" font-family="'Liberation Sans'" font-size="21.22" font-weight="normal" fill="#000" >-</text>
<circle cx="2247.7" cy="1517.9" r="11.5" fill="#f0f0f0" stroke="#d4d4d4" stroke-width="2"/>
<circle cx="2247.7" cy="1517.9" r="6.8" fill="#6b6b6b" stroke="none" stroke-width="1"/>
<text x="2273.67" y="1440.90" font-family="'Liberation Sans'" font-size="21.22" font-weight="normal" fill="#000" textLength="56.87" lengthAdjust="spacingAndGlyphs" >Edge:</text>
<rect x="2365.2" y="1419.4" width="33.3" height="29.3" fill="#5aa0e6" />
<rect x="2367.2" y="1421.4" width="29.3" height="25.3" fill="url(#gsel)" />
<path d="M2374,1439 L2382,1439 L2382,1428 L2390,1428 M2379,1432 L2382,1428 L2385,1432" stroke="#000" stroke-width="2" fill="none" />
<rect x="2403.4" y="1419.4" width="37.4" height="29.3" fill="#adadad" />
<rect x="2405.4" y="1421.4" width="33.4" height="25.3" fill="url(#gbtn)" />
<path d="M2413,1428 L2421,1428 L2421,1439 L2430,1439 M2418,1434 L2421,1438 L2424,1434" stroke="#000" stroke-width="2" fill="none" />
<rect x="2451.2" y="1419.7" width="41.4" height="32.8" fill="#adadad" />
<rect x="2453.2" y="1421.7" width="37.4" height="28.8" fill="url(#gbtn)" />
<text x="2464.40" y="1443.40" font-family="'Liberation Sans'" font-size="21.22" font-weight="normal" fill="#000" >A</text>
<rect x="2497.2" y="1419.7" width="39.2" height="32.8" fill="#adadad" />
<rect x="2499.2" y="1421.7" width="35.2" height="28.8" fill="url(#gbtn)" />
<text x="2509.30" y="1443.40" font-family="'Liberation Sans'" font-size="21.22" font-weight="normal" fill="#000" >B</text>
<rect x="2541" y="1419.7" width="49.8" height="32.8" fill="#5aa0e6" />
<rect x="2543" y="1421.7" width="45.8" height="28.8" fill="url(#gsel)" />
<text x="2550.02" y="1443.40" font-family="'Liberation Sans'" font-size="21.22" font-weight="normal" fill="#000" >Ext</text>
<text x="2273.65" y="1480.70" font-family="'Liberation Sans'" font-size="21.22" font-weight="normal" fill="#000" textLength="59.33" lengthAdjust="spacingAndGlyphs" >Level:</text>
<rect x="2363.6" y="1459.5" width="169.4" height="36.2" fill="#acacac" />
<rect x="2365.6" y="1461.5" width="165.4" height="32.2" fill="#fff" />
<rect x="2533.3" y="1459.5" width="59.1" height="36.2" fill="#acacac" />
<rect x="2535.3" y="1461.5" width="55.1" height="32.2" fill="#fff" />
<text x="2374.00" y="1483.00" font-family="'Liberation Sans'" font-size="20.93" font-weight="normal" fill="#000" >0</text>
<text x="2547.60" y="1483.00" font-family="'Liberation Sans'" font-size="20.93" font-weight="normal" fill="#000" >V</text>
<text x="2274.70" y="1524.20" font-family="'Liberation Sans'" font-size="21.22" font-weight="normal" fill="#000" textLength="47.83" lengthAdjust="spacingAndGlyphs" >Type</text>
<rect x="2337.4" y="1499.5" width="61.1" height="34.8" fill="#adadad" />
<rect x="2339.4" y="1501.5" width="57.1" height="30.8" fill="url(#gbtn)" />
<text x="2344.72" y="1524.20" font-family="'Liberation Sans'" font-size="21.22" font-weight="normal" fill="#000" >Sing.</text>
<rect x="2407.3" y="1499.5" width="55" height="34.8" fill="#5aa0e6" />
<rect x="2409.3" y="1501.5" width="51" height="30.8" fill="url(#gsel)" />
<text x="2415.79" y="1524.20" font-family="'Liberation Sans'" font-size="21.22" font-weight="normal" fill="#000" >Nor.</text>
<rect x="2467.4" y="1499.5" width="57.1" height="34.8" fill="#adadad" />
<rect x="2469.4" y="1501.5" width="53.1" height="30.8" fill="url(#gbtn)" />
<text x="2474.53" y="1524.20" font-family="'Liberation Sans'" font-size="21.22" font-weight="normal" fill="#000" >Auto</text>
<rect x="2533.3" y="1499.5" width="60.6" height="34.8" fill="#adadad" />
<rect x="2535.3" y="1501.5" width="56.6" height="30.8" fill="url(#gbtn)" />
<text x="2538.14" y="1524.20" font-family="'Liberation Sans'" font-size="21.22" font-weight="normal" fill="#000" >None</text>
</svg>
</body></html>
